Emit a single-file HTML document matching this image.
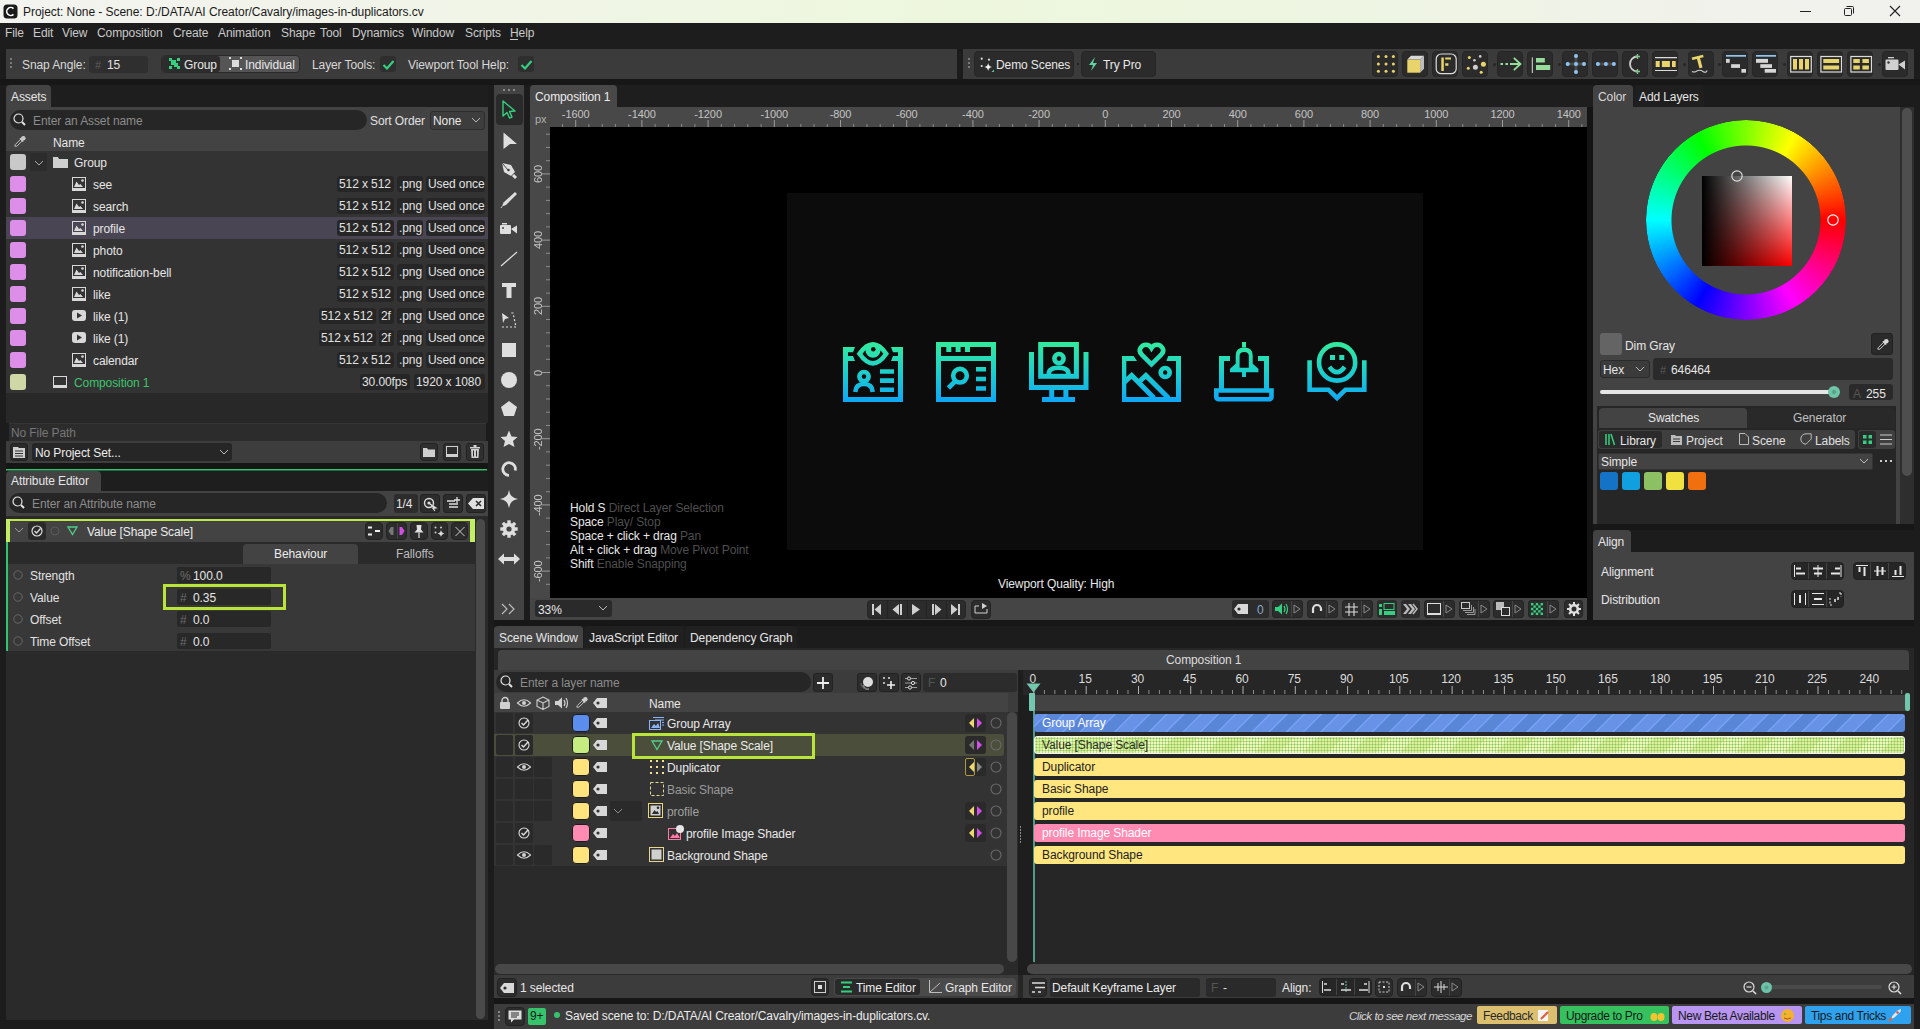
<!DOCTYPE html><html><head><meta charset="utf-8"><style>
*{box-sizing:border-box}
html,body{margin:0;padding:0}
body{width:1920px;height:1029px;overflow:hidden;position:relative;background:#1c1c1c;font-family:"Liberation Sans",sans-serif;font-size:12px;color:#d6d6d6}
.a{position:absolute}
.t{white-space:nowrap;line-height:14px;letter-spacing:-0.1px}
svg{overflow:visible}
</style></head><body><div class="a " style="left:0px;top:0px;width:1920px;height:23px;background:linear-gradient(90deg,#f3f3ef 0%,#f1f4e9 20%,#edf7dd 50%,#eef5e2 70%,#f0f2ea 88%,#f1f1ee 100%);"></div>
<svg class="a" style="left:3px;top:4px;" width="15" height="15" viewBox="0 0 15 15"><rect x="0.5" y="0.5" width="14" height="14" rx="3.5" fill="#1a1a1a"/><path d="M10.5 4.6 A4 4 0 1 0 10.5 10.4" stroke="#fff" stroke-width="1.6" fill="none"/></svg>
<div class="a t" style="left:23px;top:5px;color:#1a1a1a;font-size:12px;letter-spacing:-0.05px">Project: None - Scene: D:/DATA/AI Creator/Cavalry/images-in-duplicators.cv</div>
<div class="a " style="left:1800px;top:11px;width:11px;height:1px;background:#222;"></div>
<svg class="a" style="left:1843px;top:5px;" width="12" height="12" viewBox="0 0 12 12"><rect x="1.5" y="3.5" width="7" height="7" rx="1" fill="none" stroke="#222"/><path d="M3.5 1.5 H9.5 Q10.5 1.5 10.5 2.5 V8.5" fill="none" stroke="#222"/></svg>
<svg class="a" style="left:1889px;top:5px;" width="12" height="12" viewBox="0 0 12 12"><path d="M1 1 L11 11 M11 1 L1 11" stroke="#222" stroke-width="1.1"/></svg>
<div class="a " style="left:0px;top:23px;width:1920px;height:26px;background:#1d1d1d;"></div>
<div class="a t" style="left:5px;top:26px;color:#c9c9c9;font-size:12px;">File</div>
<div class="a t" style="left:33px;top:26px;color:#c9c9c9;font-size:12px;">Edit</div>
<div class="a t" style="left:62px;top:26px;color:#c9c9c9;font-size:12px;">View</div>
<div class="a t" style="left:97px;top:26px;color:#c9c9c9;font-size:12px;">Composition</div>
<div class="a t" style="left:173px;top:26px;color:#c9c9c9;font-size:12px;">Create</div>
<div class="a t" style="left:218px;top:26px;color:#c9c9c9;font-size:12px;">Animation</div>
<div class="a t" style="left:281px;top:26px;color:#c9c9c9;font-size:12px;">Shape</div>
<div class="a t" style="left:320px;top:26px;color:#c9c9c9;font-size:12px;">Tool</div>
<div class="a t" style="left:352px;top:26px;color:#c9c9c9;font-size:12px;">Dynamics</div>
<div class="a t" style="left:412px;top:26px;color:#c9c9c9;font-size:12px;">Window</div>
<div class="a t" style="left:465px;top:26px;color:#c9c9c9;font-size:12px;">Scripts</div>
<div class="a t" style="left:510px;top:26px;color:#c9c9c9;font-size:12px;">Help</div>
<div class="a " style="left:510px;top:39px;width:8px;height:1px;background:#c9c9c9;"></div>
<div class="a " style="left:0px;top:79px;width:1920px;height:6px;background:#171717;"></div>
<div class="a " style="left:6px;top:49px;width:951px;height:30px;background:#3b3b3b;"></div>
<div class="a " style="left:963px;top:49px;width:951px;height:30px;background:#3b3b3b;"></div>
<div class="a " style="left:10px;top:58px;width:2px;height:2px;background:#7a7a7a;"></div>
<div class="a " style="left:10px;top:62px;width:2px;height:2px;background:#7a7a7a;"></div>
<div class="a " style="left:10px;top:66px;width:2px;height:2px;background:#7a7a7a;"></div>
<div class="a " style="left:968px;top:58px;width:2px;height:2px;background:#7a7a7a;"></div>
<div class="a " style="left:968px;top:62px;width:2px;height:2px;background:#7a7a7a;"></div>
<div class="a " style="left:968px;top:66px;width:2px;height:2px;background:#7a7a7a;"></div>
<div class="a t" style="left:22px;top:58px;color:#d8d8d8;font-size:12px;">Snap Angle:</div>
<div class="a " style="left:89px;top:56px;width:59px;height:17px;background:#2f2f2f;border-radius:3px"></div>
<div class="a t" style="left:95px;top:58px;color:#5c5c5c;font-size:11px;">#</div>
<div class="a t" style="left:107px;top:58px;color:#e0e0e0;font-size:12px;">15</div>
<div class="a " style="left:161px;top:55px;width:139px;height:18px;background:#555555;border-radius:4px;border:1px solid #2a2a2a"></div>
<div class="a " style="left:162px;top:56px;width:58px;height:16px;background:#2c2c2c;border-radius:3px"></div>
<svg class="a" style="left:168px;top:57px;" width="13" height="13" viewBox="0 0 13 13"><rect x="1" y="1" width="3" height="3" fill="#35d07f"/><rect x="9" y="1" width="3" height="3" fill="#35d07f"/><rect x="1" y="9" width="3" height="3" fill="#35d07f"/><rect x="9" y="9" width="3" height="3" fill="#35d07f"/><rect x="3" y="3" width="5" height="5" fill="#35d07f"/><rect x="6" y="6" width="4" height="4" fill="#35d07f"/></svg>
<div class="a t" style="left:184px;top:58px;color:#e8e8e8;font-size:12px;">Group</div>
<svg class="a" style="left:229px;top:57px;" width="13" height="13" viewBox="0 0 13 13"><rect x="0" y="0" width="2" height="2" fill="#ddd"/><rect x="11" y="0" width="2" height="2" fill="#ddd"/><rect x="0" y="11" width="2" height="2" fill="#ddd"/><rect x="11" y="11" width="2" height="2" fill="#ddd"/><rect x="3" y="3" width="7" height="7" fill="#ddd"/></svg>
<div class="a t" style="left:245px;top:58px;color:#e8e8e8;font-size:12px;">Individual</div>
<div class="a t" style="left:312px;top:58px;color:#d8d8d8;font-size:12px;">Layer Tools:</div>
<div class="a " style="left:380px;top:56px;width:16px;height:16px;background:#2e2e2e;border-radius:3px"></div>
<svg class="a" style="left:380px;top:56px;" width="16" height="16" viewBox="0 0 16 16"><path d="M3.5 9 L7 12.5 L13.5 5" stroke="#35d07f" stroke-width="2.2" fill="none"/></svg>
<div class="a t" style="left:408px;top:58px;color:#d8d8d8;font-size:12px;">Viewport Tool Help:</div>
<div class="a " style="left:518px;top:56px;width:16px;height:16px;background:#2e2e2e;border-radius:3px"></div>
<svg class="a" style="left:518px;top:56px;" width="16" height="16" viewBox="0 0 16 16"><path d="M3.5 9 L7 12.5 L13.5 5" stroke="#35d07f" stroke-width="2.2" fill="none"/></svg>
<div class="a " style="left:974px;top:51px;width:100px;height:26px;background:#2b2b2b;border-radius:4px;border:1px solid #262626"></div>
<svg class="a" style="left:978px;top:55px;" width="18" height="18" viewBox="0 0 18 18"><circle cx="3.7" cy="3.7" r="1.1" fill="#ddd"/><circle cx="11" cy="4.7" r="1.1" fill="#ddd"/><circle cx="3.7" cy="11" r="1.1" fill="#ddd"/><path d="M10.2 8 Q10.7 11.3 14 12 Q10.7 12.7 10.2 16 Q9.7 12.7 6.4 12 Q9.7 11.3 10.2 8 Z" fill="#eee"/><path d="M16 14.5 V17 H13.5 Z" fill="#5fc4a0"/></svg>
<div class="a t" style="left:996px;top:58px;color:#e8e8e8;font-size:12px;">Demo Scenes</div>
<div class="a " style="left:1077px;top:63px;width:2px;height:2px;background:#222;"></div>
<div class="a " style="left:1081px;top:51px;width:75px;height:26px;background:#2b2b2b;border-radius:4px;border:1px solid #262626"></div>
<svg class="a" style="left:1088px;top:57px;" width="10" height="14" viewBox="0 0 10 14"><path d="M7 0 L1 8 H5 L3 14 L9 6 H5 Z" fill="#5fd3a5"/></svg>
<div class="a t" style="left:1103px;top:58px;color:#e8e8e8;font-size:12px;">Try Pro</div>
<div class="a " style="left:1372px;top:51px;width:26px;height:26px;background:#2b2b2b;border-radius:4px;border:1px solid #262626"></div>
<div class="a " style="left:1402px;top:51px;width:26px;height:26px;background:#2b2b2b;border-radius:4px;border:1px solid #262626"></div>
<div class="a " style="left:1432px;top:51px;width:26px;height:26px;background:#2b2b2b;border-radius:4px;border:1px solid #262626"></div>
<div class="a " style="left:1462px;top:51px;width:26px;height:26px;background:#2b2b2b;border-radius:4px;border:1px solid #262626"></div>
<div class="a " style="left:1497px;top:51px;width:26px;height:26px;background:#2b2b2b;border-radius:4px;border:1px solid #262626"></div>
<div class="a " style="left:1527px;top:51px;width:26px;height:26px;background:#2b2b2b;border-radius:4px;border:1px solid #262626"></div>
<div class="a " style="left:1562px;top:51px;width:26px;height:26px;background:#2b2b2b;border-radius:4px;border:1px solid #262626"></div>
<div class="a " style="left:1592px;top:51px;width:26px;height:26px;background:#2b2b2b;border-radius:4px;border:1px solid #262626"></div>
<div class="a " style="left:1622px;top:51px;width:26px;height:26px;background:#2b2b2b;border-radius:4px;border:1px solid #262626"></div>
<div class="a " style="left:1652px;top:51px;width:26px;height:26px;background:#2b2b2b;border-radius:4px;border:1px solid #262626"></div>
<div class="a " style="left:1688px;top:51px;width:26px;height:26px;background:#2b2b2b;border-radius:4px;border:1px solid #262626"></div>
<div class="a " style="left:1722px;top:51px;width:26px;height:26px;background:#2b2b2b;border-radius:4px;border:1px solid #262626"></div>
<div class="a " style="left:1752px;top:51px;width:26px;height:26px;background:#2b2b2b;border-radius:4px;border:1px solid #262626"></div>
<div class="a " style="left:1787px;top:51px;width:26px;height:26px;background:#2b2b2b;border-radius:4px;border:1px solid #262626"></div>
<div class="a " style="left:1817px;top:51px;width:26px;height:26px;background:#2b2b2b;border-radius:4px;border:1px solid #262626"></div>
<div class="a " style="left:1847px;top:51px;width:26px;height:26px;background:#2b2b2b;border-radius:4px;border:1px solid #262626"></div>
<div class="a " style="left:1882px;top:51px;width:26px;height:26px;background:#2b2b2b;border-radius:4px;border:1px solid #262626"></div>
<div class="a " style="left:1493px;top:63px;width:3px;height:3px;background:#262626;border-radius:50%"></div>
<div class="a " style="left:1558px;top:63px;width:3px;height:3px;background:#262626;border-radius:50%"></div>
<div class="a " style="left:1683px;top:63px;width:3px;height:3px;background:#262626;border-radius:50%"></div>
<div class="a " style="left:1718px;top:63px;width:3px;height:3px;background:#262626;border-radius:50%"></div>
<div class="a " style="left:1783px;top:63px;width:3px;height:3px;background:#262626;border-radius:50%"></div>
<div class="a " style="left:1878px;top:63px;width:3px;height:3px;background:#262626;border-radius:50%"></div>
<div class="a " style="left:6px;top:85px;width:482px;height:22px;background:#1e1e1e;"></div>
<div class="a " style="left:6px;top:85px;width:45px;height:22px;background:#434343;border-radius:4px 4px 0 0"></div>
<div class="a t" style="left:11px;top:90px;color:#e6e6e6;font-size:12px;">Assets</div>
<div class="a " style="left:6px;top:107px;width:482px;height:44px;background:#434343;"></div>
<div class="a " style="left:10px;top:110px;width:357px;height:20px;background:#262626;border-radius:10px"></div>
<svg class="a" style="left:13px;top:113px;" width="13" height="13" viewBox="0 0 13 13"><circle cx="5.5" cy="5.5" r="4.5" stroke="#e6e6e6" stroke-width="1.2" fill="none"/><path d="M9 9 L12 12" stroke="#e6e6e6" stroke-width="2"/></svg>
<div class="a t" style="left:33px;top:114px;color:#8c8c8c;font-size:12px;">Enter an Asset name</div>
<div class="a t" style="left:370px;top:114px;color:#e0e0e0;font-size:12px;">Sort Order</div>
<div class="a " style="left:430px;top:111px;width:55px;height:19px;background:#3d3d3d;border-radius:3px;border:1px solid #2d2d2d"></div>
<div class="a t" style="left:433px;top:114px;color:#e8e8e8;font-size:12px;">None</div>
<svg class="a" style="left:471px;top:117px;" width="10" height="6" viewBox="0 0 10 6"><path d="M1 1 L5 5 L9 1" stroke="#bbb" stroke-width="1" fill="none"/></svg>
<svg class="a" style="left:13px;top:135px;" width="13" height="13" viewBox="0 0 13 13"><path d="M1.8 11.2 L2.3 9.6 L7.6 4.3 L9.2 5.9 L3.9 11.2 Z" stroke="#c8c8c8" stroke-width="0.9" fill="none"/><path d="M7 3.2 L10.3 6.5" stroke="#c8c8c8" stroke-width="1.6"/><circle cx="10.3" cy="3.2" r="2.3" fill="#c8c8c8"/></svg>
<div class="a t" style="left:53px;top:136px;color:#e6e6e6;font-size:12px;">Name</div>
<div class="a " style="left:6px;top:151px;width:482px;height:242px;background:#333333;"></div>
<div class="a " style="left:6px;top:217px;width:482px;height:22px;background:#4a4552;"></div>
<div class="a " style="left:10px;top:154px;width:16px;height:16px;background:#c9c9c9;border-radius:3px"></div>
<div class="a " style="left:30px;top:153px;width:17px;height:18px;background:#2c2c2c;border-radius:2px"></div>
<svg class="a" style="left:34px;top:160px;" width="10" height="6" viewBox="0 0 10 6"><path d="M1 1 L5 5 L9 1" stroke="#aaa" stroke-width="1" fill="none"/></svg>
<svg class="a" style="left:53px;top:156px;" width="15" height="12" viewBox="0 0 15 12"><path d="M0 1 H5 L6 3 H15 V12 H0 Z" fill="#cfcfcf"/></svg>
<div class="a t" style="left:74px;top:156px;color:#e6e6e6;font-size:12px;">Group</div>
<div class="a " style="left:10px;top:176px;width:16px;height:16px;background:#dc8ee8;border-radius:3px"></div>
<svg class="a" style="left:72px;top:177px;" width="14" height="14" viewBox="0 0 14 14"><rect x="0.5" y="0.5" width="13" height="13" fill="none" stroke="#d8d8d8"/><rect x="0" y="11" width="14" height="3" fill="#d8d8d8"/><path d="M2 10 L4.5 4.5 L7 8 L8.5 7 L11 10 Z" fill="#d8d8d8"/><circle cx="10.5" cy="3.5" r="1.3" fill="#d8d8d8"/></svg>
<div class="a t" style="left:93px;top:178px;color:#e6e6e6;font-size:12px;">see</div>
<div class="a " style="left:337px;top:176px;width:57px;height:16px;background:#262626;border-radius:3px"></div>
<div class="a t" style="left:339px;top:177px;color:#e2e2e2;font-size:12px;">512 x 512</div>
<div class="a " style="left:397px;top:176px;width:26px;height:16px;background:#262626;border-radius:3px"></div>
<div class="a t" style="left:399px;top:177px;color:#e2e2e2;font-size:12px;">.png</div>
<div class="a " style="left:426px;top:176px;width:59px;height:16px;background:#262626;border-radius:3px"></div>
<div class="a t" style="left:428px;top:177px;color:#e2e2e2;font-size:12px;">Used once</div>
<div class="a " style="left:10px;top:198px;width:16px;height:16px;background:#dc8ee8;border-radius:3px"></div>
<svg class="a" style="left:72px;top:199px;" width="14" height="14" viewBox="0 0 14 14"><rect x="0.5" y="0.5" width="13" height="13" fill="none" stroke="#d8d8d8"/><rect x="0" y="11" width="14" height="3" fill="#d8d8d8"/><path d="M2 10 L4.5 4.5 L7 8 L8.5 7 L11 10 Z" fill="#d8d8d8"/><circle cx="10.5" cy="3.5" r="1.3" fill="#d8d8d8"/></svg>
<div class="a t" style="left:93px;top:200px;color:#e6e6e6;font-size:12px;">search</div>
<div class="a " style="left:337px;top:198px;width:57px;height:16px;background:#262626;border-radius:3px"></div>
<div class="a t" style="left:339px;top:199px;color:#e2e2e2;font-size:12px;">512 x 512</div>
<div class="a " style="left:397px;top:198px;width:26px;height:16px;background:#262626;border-radius:3px"></div>
<div class="a t" style="left:399px;top:199px;color:#e2e2e2;font-size:12px;">.png</div>
<div class="a " style="left:426px;top:198px;width:59px;height:16px;background:#262626;border-radius:3px"></div>
<div class="a t" style="left:428px;top:199px;color:#e2e2e2;font-size:12px;">Used once</div>
<div class="a " style="left:10px;top:220px;width:16px;height:16px;background:#dc8ee8;border-radius:3px"></div>
<svg class="a" style="left:72px;top:221px;" width="14" height="14" viewBox="0 0 14 14"><rect x="0.5" y="0.5" width="13" height="13" fill="none" stroke="#d8d8d8"/><rect x="0" y="11" width="14" height="3" fill="#d8d8d8"/><path d="M2 10 L4.5 4.5 L7 8 L8.5 7 L11 10 Z" fill="#d8d8d8"/><circle cx="10.5" cy="3.5" r="1.3" fill="#d8d8d8"/></svg>
<div class="a t" style="left:93px;top:222px;color:#e6e6e6;font-size:12px;">profile</div>
<div class="a " style="left:337px;top:220px;width:57px;height:16px;background:#262626;border-radius:3px"></div>
<div class="a t" style="left:339px;top:221px;color:#e2e2e2;font-size:12px;">512 x 512</div>
<div class="a " style="left:397px;top:220px;width:26px;height:16px;background:#262626;border-radius:3px"></div>
<div class="a t" style="left:399px;top:221px;color:#e2e2e2;font-size:12px;">.png</div>
<div class="a " style="left:426px;top:220px;width:59px;height:16px;background:#262626;border-radius:3px"></div>
<div class="a t" style="left:428px;top:221px;color:#e2e2e2;font-size:12px;">Used once</div>
<div class="a " style="left:10px;top:242px;width:16px;height:16px;background:#dc8ee8;border-radius:3px"></div>
<svg class="a" style="left:72px;top:243px;" width="14" height="14" viewBox="0 0 14 14"><rect x="0.5" y="0.5" width="13" height="13" fill="none" stroke="#d8d8d8"/><rect x="0" y="11" width="14" height="3" fill="#d8d8d8"/><path d="M2 10 L4.5 4.5 L7 8 L8.5 7 L11 10 Z" fill="#d8d8d8"/><circle cx="10.5" cy="3.5" r="1.3" fill="#d8d8d8"/></svg>
<div class="a t" style="left:93px;top:244px;color:#e6e6e6;font-size:12px;">photo</div>
<div class="a " style="left:337px;top:242px;width:57px;height:16px;background:#262626;border-radius:3px"></div>
<div class="a t" style="left:339px;top:243px;color:#e2e2e2;font-size:12px;">512 x 512</div>
<div class="a " style="left:397px;top:242px;width:26px;height:16px;background:#262626;border-radius:3px"></div>
<div class="a t" style="left:399px;top:243px;color:#e2e2e2;font-size:12px;">.png</div>
<div class="a " style="left:426px;top:242px;width:59px;height:16px;background:#262626;border-radius:3px"></div>
<div class="a t" style="left:428px;top:243px;color:#e2e2e2;font-size:12px;">Used once</div>
<div class="a " style="left:10px;top:264px;width:16px;height:16px;background:#dc8ee8;border-radius:3px"></div>
<svg class="a" style="left:72px;top:265px;" width="14" height="14" viewBox="0 0 14 14"><rect x="0.5" y="0.5" width="13" height="13" fill="none" stroke="#d8d8d8"/><rect x="0" y="11" width="14" height="3" fill="#d8d8d8"/><path d="M2 10 L4.5 4.5 L7 8 L8.5 7 L11 10 Z" fill="#d8d8d8"/><circle cx="10.5" cy="3.5" r="1.3" fill="#d8d8d8"/></svg>
<div class="a t" style="left:93px;top:266px;color:#e6e6e6;font-size:12px;">notification-bell</div>
<div class="a " style="left:337px;top:264px;width:57px;height:16px;background:#262626;border-radius:3px"></div>
<div class="a t" style="left:339px;top:265px;color:#e2e2e2;font-size:12px;">512 x 512</div>
<div class="a " style="left:397px;top:264px;width:26px;height:16px;background:#262626;border-radius:3px"></div>
<div class="a t" style="left:399px;top:265px;color:#e2e2e2;font-size:12px;">.png</div>
<div class="a " style="left:426px;top:264px;width:59px;height:16px;background:#262626;border-radius:3px"></div>
<div class="a t" style="left:428px;top:265px;color:#e2e2e2;font-size:12px;">Used once</div>
<div class="a " style="left:10px;top:286px;width:16px;height:16px;background:#dc8ee8;border-radius:3px"></div>
<svg class="a" style="left:72px;top:287px;" width="14" height="14" viewBox="0 0 14 14"><rect x="0.5" y="0.5" width="13" height="13" fill="none" stroke="#d8d8d8"/><rect x="0" y="11" width="14" height="3" fill="#d8d8d8"/><path d="M2 10 L4.5 4.5 L7 8 L8.5 7 L11 10 Z" fill="#d8d8d8"/><circle cx="10.5" cy="3.5" r="1.3" fill="#d8d8d8"/></svg>
<div class="a t" style="left:93px;top:288px;color:#e6e6e6;font-size:12px;">like</div>
<div class="a " style="left:337px;top:286px;width:57px;height:16px;background:#262626;border-radius:3px"></div>
<div class="a t" style="left:339px;top:287px;color:#e2e2e2;font-size:12px;">512 x 512</div>
<div class="a " style="left:397px;top:286px;width:26px;height:16px;background:#262626;border-radius:3px"></div>
<div class="a t" style="left:399px;top:287px;color:#e2e2e2;font-size:12px;">.png</div>
<div class="a " style="left:426px;top:286px;width:59px;height:16px;background:#262626;border-radius:3px"></div>
<div class="a t" style="left:428px;top:287px;color:#e2e2e2;font-size:12px;">Used once</div>
<div class="a " style="left:10px;top:308px;width:16px;height:16px;background:#dc8ee8;border-radius:3px"></div>
<svg class="a" style="left:72px;top:309px;" width="14" height="14" viewBox="0 0 14 14"><rect x="0" y="1" width="14" height="11" rx="3" fill="#d8d8d8"/><path d="M5 3.5 L10 6.5 L5 9.5 Z" fill="#333"/></svg>
<div class="a t" style="left:93px;top:310px;color:#e6e6e6;font-size:12px;">like (1)</div>
<div class="a " style="left:319px;top:308px;width:57px;height:16px;background:#262626;border-radius:3px"></div>
<div class="a t" style="left:321px;top:309px;color:#e2e2e2;font-size:12px;">512 x 512</div>
<div class="a " style="left:379px;top:308px;width:15px;height:16px;background:#262626;border-radius:3px"></div>
<div class="a t" style="left:381px;top:309px;color:#e2e2e2;font-size:12px;">2f</div>
<div class="a " style="left:397px;top:308px;width:26px;height:16px;background:#262626;border-radius:3px"></div>
<div class="a t" style="left:399px;top:309px;color:#e2e2e2;font-size:12px;">.png</div>
<div class="a " style="left:426px;top:308px;width:59px;height:16px;background:#262626;border-radius:3px"></div>
<div class="a t" style="left:428px;top:309px;color:#e2e2e2;font-size:12px;">Used once</div>
<div class="a " style="left:10px;top:330px;width:16px;height:16px;background:#dc8ee8;border-radius:3px"></div>
<svg class="a" style="left:72px;top:331px;" width="14" height="14" viewBox="0 0 14 14"><rect x="0" y="1" width="14" height="11" rx="3" fill="#d8d8d8"/><path d="M5 3.5 L10 6.5 L5 9.5 Z" fill="#333"/></svg>
<div class="a t" style="left:93px;top:332px;color:#e6e6e6;font-size:12px;">like (1)</div>
<div class="a " style="left:319px;top:330px;width:57px;height:16px;background:#262626;border-radius:3px"></div>
<div class="a t" style="left:321px;top:331px;color:#e2e2e2;font-size:12px;">512 x 512</div>
<div class="a " style="left:379px;top:330px;width:15px;height:16px;background:#262626;border-radius:3px"></div>
<div class="a t" style="left:381px;top:331px;color:#e2e2e2;font-size:12px;">2f</div>
<div class="a " style="left:397px;top:330px;width:26px;height:16px;background:#262626;border-radius:3px"></div>
<div class="a t" style="left:399px;top:331px;color:#e2e2e2;font-size:12px;">.png</div>
<div class="a " style="left:426px;top:330px;width:59px;height:16px;background:#262626;border-radius:3px"></div>
<div class="a t" style="left:428px;top:331px;color:#e2e2e2;font-size:12px;">Used once</div>
<div class="a " style="left:10px;top:352px;width:16px;height:16px;background:#dc8ee8;border-radius:3px"></div>
<svg class="a" style="left:72px;top:353px;" width="14" height="14" viewBox="0 0 14 14"><rect x="0.5" y="0.5" width="13" height="13" fill="none" stroke="#d8d8d8"/><rect x="0" y="11" width="14" height="3" fill="#d8d8d8"/><path d="M2 10 L4.5 4.5 L7 8 L8.5 7 L11 10 Z" fill="#d8d8d8"/><circle cx="10.5" cy="3.5" r="1.3" fill="#d8d8d8"/></svg>
<div class="a t" style="left:93px;top:354px;color:#e6e6e6;font-size:12px;">calendar</div>
<div class="a " style="left:337px;top:352px;width:57px;height:16px;background:#262626;border-radius:3px"></div>
<div class="a t" style="left:339px;top:353px;color:#e2e2e2;font-size:12px;">512 x 512</div>
<div class="a " style="left:397px;top:352px;width:26px;height:16px;background:#262626;border-radius:3px"></div>
<div class="a t" style="left:399px;top:353px;color:#e2e2e2;font-size:12px;">.png</div>
<div class="a " style="left:426px;top:352px;width:59px;height:16px;background:#262626;border-radius:3px"></div>
<div class="a t" style="left:428px;top:353px;color:#e2e2e2;font-size:12px;">Used once</div>
<div class="a " style="left:10px;top:374px;width:16px;height:16px;background:#cfd7a6;border-radius:3px"></div>
<svg class="a" style="left:53px;top:376px;" width="14" height="12" viewBox="0 0 14 12"><rect x="0.5" y="0.5" width="13" height="9" fill="none" stroke="#d8d8d8"/><rect x="0" y="10" width="14" height="2" fill="#d8d8d8"/></svg>
<div class="a t" style="left:74px;top:376px;color:#3cc46c;font-size:12px;">Composition 1</div>
<div class="a " style="left:360px;top:374px;width:50px;height:16px;background:#262626;border-radius:3px"></div>
<div class="a t" style="left:362px;top:375px;color:#e2e2e2;font-size:12px;">30.00fps</div>
<div class="a " style="left:414px;top:374px;width:71px;height:16px;background:#262626;border-radius:3px"></div>
<div class="a t" style="left:416px;top:375px;color:#e2e2e2;font-size:12px;">1920 x 1080</div>
<div class="a " style="left:6px;top:393px;width:482px;height:30px;background:#282828;"></div>
<div class="a " style="left:9px;top:423px;width:477px;height:18px;background:#2c2c2c;border-top:1px solid #353535"></div>
<div class="a t" style="left:11px;top:426px;color:#777;font-size:12px;">No File Path</div>
<div class="a " style="left:6px;top:441px;width:482px;height:22px;background:#3d3d3d;"></div>
<div class="a " style="left:10px;top:443px;width:18px;height:18px;background:#2a2a2a;border-radius:3px;border:1px solid #222"></div>
<svg class="a" style="left:13px;top:446px;" width="12" height="12" viewBox="0 0 12 12"><path d="M0 1 H5 L6 2 H12 V12 H0 Z" fill="#cfcfcf"/><path d="M2 5 H10 M2 7.5 H10 M2 10 H10" stroke="#333" stroke-width="1"/></svg>
<div class="a " style="left:32px;top:443px;width:200px;height:18px;background:#262626;border-radius:3px"></div>
<div class="a t" style="left:35px;top:446px;color:#ececec;font-size:12px;">No Project Set...</div>
<svg class="a" style="left:219px;top:449px;" width="10" height="6" viewBox="0 0 10 6"><path d="M1 1 L5 5 L9 1" stroke="#bbb" stroke-width="1" fill="none"/></svg>
<div class="a " style="left:420px;top:443px;width:18px;height:18px;background:#2f2f2f;border-radius:3px;border:1px solid #232323"></div>
<div class="a " style="left:443px;top:443px;width:18px;height:18px;background:#2f2f2f;border-radius:3px;border:1px solid #232323"></div>
<div class="a " style="left:466px;top:443px;width:18px;height:18px;background:#2f2f2f;border-radius:3px;border:1px solid #232323"></div>
<svg class="a" style="left:423px;top:447px;" width="12" height="10" viewBox="0 0 12 10"><path d="M0 1 H4 L5 2.5 H12 V10 H0 Z" fill="#cfcfcf"/></svg>
<svg class="a" style="left:446px;top:446px;" width="12" height="12" viewBox="0 0 12 12"><rect x="0.5" y="0.5" width="11" height="8" fill="none" stroke="#d0d0d0"/><rect x="0" y="9" width="12" height="2" fill="#d0d0d0"/></svg>
<svg class="a" style="left:470px;top:445px;" width="10" height="14" viewBox="0 0 10 14"><rect x="0" y="2" width="10" height="1.5" fill="#d0d0d0"/><rect x="3.5" y="0" width="3" height="2" fill="#d0d0d0"/><path d="M1 4 H9 L8.5 13 H1.5 Z" fill="#d0d0d0"/><path d="M3.5 5.5 V11.5 M6.5 5.5 V11.5" stroke="#2f2f2f" stroke-width="1"/></svg>
<div class="a " style="left:6px;top:463px;width:482px;height:6px;background:#161616;"></div>
<div class="a " style="left:6px;top:469px;width:481px;height:1px;background:#2fc66f;"></div>
<div class="a " style="left:6px;top:470px;width:481px;height:1px;background:rgba(47,198,111,0.45);"></div>
<div class="a " style="left:6px;top:471px;width:482px;height:20px;background:#1e1e1e;"></div>
<div class="a " style="left:6px;top:471px;width:95px;height:20px;background:#434343;border-radius:4px 4px 0 0"></div>
<div class="a t" style="left:11px;top:474px;color:#e6e6e6;font-size:12px;">Attribute Editor</div>
<div class="a " style="left:6px;top:491px;width:482px;height:529px;background:#2a2a2a;"></div>
<div class="a " style="left:6px;top:491px;width:482px;height:25px;background:#434343;"></div>
<div class="a " style="left:9px;top:493px;width:378px;height:20px;background:#262626;border-radius:10px"></div>
<svg class="a" style="left:12px;top:496px;" width="13" height="13" viewBox="0 0 13 13"><circle cx="5.5" cy="5.5" r="4.5" stroke="#e6e6e6" stroke-width="1.2" fill="none"/><path d="M9 9 L12 12" stroke="#e6e6e6" stroke-width="2"/></svg>
<div class="a t" style="left:32px;top:497px;color:#8c8c8c;font-size:12px;">Enter an Attribute name</div>
<div class="a " style="left:394px;top:494px;width:24px;height:19px;background:#2c2c2c;border-radius:3px"></div>
<div class="a t" style="left:396px;top:497px;color:#e6e6e6;font-size:12px;">1/4</div>
<div class="a " style="left:420px;top:494px;width:20px;height:19px;background:#2c2c2c;border-radius:3px;border:1px solid #222"></div>
<div class="a " style="left:443px;top:494px;width:20px;height:19px;background:#2c2c2c;border-radius:3px;border:1px solid #222"></div>
<div class="a " style="left:466px;top:494px;width:20px;height:19px;background:#2c2c2c;border-radius:3px;border:1px solid #222"></div>
<svg class="a" style="left:423px;top:497px;" width="14" height="14" viewBox="0 0 14 14"><circle cx="6" cy="6" r="4.5" stroke="#ddd" stroke-width="1.4" fill="none"/><circle cx="6" cy="6" r="1.6" fill="#ddd"/><path d="M7 7 L13 11 L10 11.5 L12 14" stroke="#ddd" stroke-width="1.2" fill="#ddd"/></svg>
<svg class="a" style="left:446px;top:497px;" width="14" height="13" viewBox="0 0 14 13"><path d="M1 4 H9 M3 7 H12 M3 10 H12" stroke="#e0e0e0" stroke-width="1.5"/><path d="M11 0 V6 M8 3 H14" stroke="#e0e0e0" stroke-width="1.3"/></svg>
<svg class="a" style="left:468px;top:498px;" width="16" height="11" viewBox="0 0 16 11"><path d="M5 0 H16 V11 H5 L0 5.5 Z" fill="#e0e0e0"/><path d="M8 3 L13 8 M13 3 L8 8" stroke="#2c2c2c" stroke-width="1.6"/></svg>
<div class="a " style="left:476px;top:519px;width:9px;height:500px;background:#4a4a4a;border-radius:5px"></div>
<div class="a " style="left:6px;top:519px;width:469px;height:132px;background:#2f2f2f;"></div>
<div class="a " style="left:6px;top:519px;width:469px;height:23px;background:#434343;"></div>
<div class="a " style="left:6px;top:519px;width:469px;height:2px;background:#bde84a;"></div>
<div class="a " style="left:6px;top:519px;width:4px;height:23px;background:#c4ee62;"></div>
<div class="a " style="left:470px;top:519px;width:5px;height:23px;background:#c4ee62;"></div>
<div class="a " style="left:6px;top:542px;width:2px;height:109px;background:#2fc66f;"></div>
<svg class="a" style="left:14px;top:527px;" width="10" height="6" viewBox="0 0 10 6"><path d="M1 1 L5 5 L9 1" stroke="#9a9a9a" stroke-width="1" fill="none"/></svg>
<div class="a " style="left:28px;top:522px;width:18px;height:18px;background:#2a2a2a;border-radius:3px"></div>
<svg class="a" style="left:31px;top:525px;" width="12" height="12" viewBox="0 0 12 12"><circle cx="6" cy="6" r="5" stroke="#ddd" stroke-width="1.2" fill="none"/><path d="M3.5 6 L5.5 8 L9.5 3.5" stroke="#ddd" stroke-width="1.3" fill="none"/></svg>
<svg class="a" style="left:50px;top:526px;" width="10" height="10" viewBox="0 0 10 10"><circle cx="5" cy="5" r="4" stroke="#5a5a5a" stroke-width="1" fill="none"/></svg>
<svg class="a" style="left:67px;top:526px;" width="11" height="9" viewBox="0 0 11 9"><path d="M1 1 H10 L5.5 8.5 Z" stroke="#4fd08a" stroke-width="1.3" fill="none"/></svg>
<div class="a t" style="left:87px;top:525px;color:#ececec;font-size:12px;">Value [Shape Scale]</div>
<div class="a " style="left:365px;top:522px;width:18px;height:18px;background:#2c2c2c;border-radius:4px;border:1px solid #232323"></div>
<div class="a " style="left:386px;top:522px;width:21px;height:18px;background:#2c2c2c;border-radius:4px;border:1px solid #232323"></div>
<div class="a " style="left:410px;top:522px;width:18px;height:18px;background:#2c2c2c;border-radius:4px;border:1px solid #232323"></div>
<div class="a " style="left:431px;top:522px;width:17px;height:18px;background:#2c2c2c;border-radius:4px;border:1px solid #232323"></div>
<div class="a " style="left:451px;top:522px;width:17px;height:18px;background:#2c2c2c;border-radius:4px;border:1px solid #232323"></div>
<div class="a " style="left:397px;top:523px;width:1px;height:16px;background:#444;"></div>
<svg class="a" style="left:367px;top:526px;" width="14" height="11" viewBox="0 0 14 11"><path d="M1 1.5 H5 M1 8.5 H5 M8 5 H13" stroke="#eee" stroke-width="2"/></svg>
<svg class="a" style="left:388px;top:526px;" width="17" height="10" viewBox="0 0 17 10"><path d="M5.5 1 V9 H3 L0.5 5 L3 1 Z" fill="#777"/><path d="M11.5 1 V9 H14 L16.5 5 L14 1 Z" fill="#d14fe0"/></svg>
<svg class="a" style="left:413px;top:525px;" width="12" height="13" viewBox="0 0 12 13"><path d="M3.5 0 H8.5 L8 4.5 L10.5 7.5 H1.5 L4 4.5 Z" fill="#e0e0e0"/><path d="M6 7.5 V13" stroke="#e0e0e0" stroke-width="1.2"/></svg>
<svg class="a" style="left:433px;top:525px;" width="13" height="13" viewBox="0 0 13 13"><circle cx="2.5" cy="2.5" r="1" fill="#ccc"/><circle cx="8" cy="2.5" r="1" fill="#ccc"/><circle cx="2.5" cy="7.5" r="1" fill="#ccc"/><path d="M8 5 Q8.5 8 11.5 8.5 Q8.5 9 8 12 Q7.5 9 4.5 8.5 Q7.5 8 8 5 Z" fill="#ddd"/></svg>
<svg class="a" style="left:454px;top:526px;" width="12" height="11" viewBox="0 0 12 11"><path d="M1.5 1 L10.5 10 M10.5 1 L1.5 10" stroke="#ccc" stroke-width="1"/></svg>
<div class="a " style="left:8px;top:542px;width:467px;height:22px;background:#2a2a2a;"></div>
<div class="a " style="left:243px;top:544px;width:115px;height:20px;background:#434343;border-radius:4px 4px 0 0"></div>
<div class="a t" style="left:274px;top:547px;color:#ececec;font-size:12px;">Behaviour</div>
<div class="a t" style="left:396px;top:547px;color:#bdbdbd;font-size:12px;">Falloffs</div>
<div class="a " style="left:8px;top:564px;width:467px;height:87px;background:#383838;"></div>
<svg class="a" style="left:13px;top:570px;" width="10" height="10" viewBox="0 0 10 10"><circle cx="5" cy="5" r="4.2" stroke="#666" stroke-width="1" fill="none"/></svg>
<div class="a t" style="left:30px;top:569px;color:#e2e2e2;font-size:12px;">Strength</div>
<div class="a " style="left:177px;top:567px;width:94px;height:16px;background:#282828;border-radius:2px"></div>
<div class="a t" style="left:180px;top:569px;color:#6c6c6c;font-size:12px;">%</div>
<div class="a t" style="left:193px;top:569px;color:#e6e6e6;font-size:12px;">100.0</div>
<svg class="a" style="left:13px;top:592px;" width="10" height="10" viewBox="0 0 10 10"><circle cx="5" cy="5" r="4.2" stroke="#666" stroke-width="1" fill="none"/></svg>
<div class="a t" style="left:30px;top:591px;color:#e2e2e2;font-size:12px;">Value</div>
<div class="a " style="left:177px;top:589px;width:94px;height:16px;background:#282828;border-radius:2px"></div>
<div class="a t" style="left:180px;top:591px;color:#6c6c6c;font-size:12px;">#</div>
<div class="a t" style="left:193px;top:591px;color:#e6e6e6;font-size:12px;">0.35</div>
<svg class="a" style="left:13px;top:614px;" width="10" height="10" viewBox="0 0 10 10"><circle cx="5" cy="5" r="4.2" stroke="#666" stroke-width="1" fill="none"/></svg>
<div class="a t" style="left:30px;top:613px;color:#e2e2e2;font-size:12px;">Offset</div>
<div class="a " style="left:177px;top:611px;width:94px;height:16px;background:#282828;border-radius:2px"></div>
<div class="a t" style="left:180px;top:613px;color:#6c6c6c;font-size:12px;">#</div>
<div class="a t" style="left:193px;top:613px;color:#e6e6e6;font-size:12px;">0.0</div>
<svg class="a" style="left:13px;top:636px;" width="10" height="10" viewBox="0 0 10 10"><circle cx="5" cy="5" r="4.2" stroke="#666" stroke-width="1" fill="none"/></svg>
<div class="a t" style="left:30px;top:635px;color:#e2e2e2;font-size:12px;">Time Offset</div>
<div class="a " style="left:177px;top:633px;width:94px;height:16px;background:#282828;border-radius:2px"></div>
<div class="a t" style="left:180px;top:635px;color:#6c6c6c;font-size:12px;">#</div>
<div class="a t" style="left:193px;top:635px;color:#e6e6e6;font-size:12px;">0.0</div>
<div class="a " style="left:163px;top:584px;width:123px;height:26px;border:3px solid #b9e43a"></div>
<div class="a " style="left:494px;top:85px;width:30px;height:535px;background:#434343;"></div>
<div class="a " style="left:503px;top:89px;width:2px;height:2px;background:#8a8a8a;"></div>
<div class="a " style="left:508px;top:89px;width:2px;height:2px;background:#8a8a8a;"></div>
<div class="a " style="left:513px;top:89px;width:2px;height:2px;background:#8a8a8a;"></div>
<div class="a " style="left:496px;top:94px;width:27px;height:31px;background:#2a2a2a;border-radius:4px"></div>
<svg class="a" style="left:499px;top:99px;" width="20" height="20" viewBox="0 0 20 20"><path d="M4 2 L16 12 L10.5 12.5 L13 18 L10.5 19 L8 13.5 L4 17 Z" stroke="#35d07f" stroke-width="1.4" fill="none" stroke-linejoin="round"/></svg>
<svg class="a" style="left:499px;top:130px;" width="20" height="20" viewBox="0 0 20 20"><path d="M4.5 2.5 L18 14 H11 L4.5 19 Z" fill="#dedede"/></svg>
<svg class="a" style="left:499px;top:160px;" width="20" height="20" viewBox="0 0 20 20"><path d="M3 3 L12 5 L16 12 L12 16 L5 12 Z" fill="#dedede"/><path d="M3 3 L9 10" stroke="#434343" stroke-width="1"/><circle cx="9.5" cy="10" r="1.3" fill="#434343"/><path d="M14 15 L17 18" stroke="#dedede" stroke-width="3"/></svg>
<svg class="a" style="left:499px;top:189px;" width="20" height="20" viewBox="0 0 20 20"><path d="M16 3 L18 5 L7 16 L3 17.5 L4.5 13.5 Z" fill="#dedede"/><path d="M3 17.5 L2 19" stroke="#dedede" stroke-width="1"/></svg>
<svg class="a" style="left:499px;top:219px;" width="20" height="20" viewBox="0 0 20 20"><rect x="1" y="6" width="11" height="9" rx="1" fill="#dedede"/><path d="M12 10 L18 6.5 V14.5 Z" fill="#dedede"/><rect x="3" y="4" width="5" height="1.5" fill="#dedede"/><circle cx="4" cy="9" r="1" fill="#434343"/></svg>
<svg class="a" style="left:499px;top:249px;" width="20" height="20" viewBox="0 0 20 20"><path d="M2 17 L18 3" stroke="#dedede" stroke-width="1.2"/></svg>
<svg class="a" style="left:499px;top:280px;" width="20" height="20" viewBox="0 0 20 20"><path d="M3 3 H17 V7 H12.5 V18 H7.5 V7 H3 Z" fill="#dedede"/></svg>
<svg class="a" style="left:499px;top:310px;" width="20" height="20" viewBox="0 0 20 20"><path d="M3 3 L10 8 L6 9 L4 13 Z" fill="#dedede"/><path d="M3 17 H17 L14 3 H12" stroke="#dedede" stroke-width="1.2" stroke-dasharray="2 2" fill="none"/></svg>
<svg class="a" style="left:499px;top:340px;" width="20" height="20" viewBox="0 0 20 20"><rect x="3" y="3" width="14" height="14" fill="#dedede"/></svg>
<svg class="a" style="left:499px;top:370px;" width="20" height="20" viewBox="0 0 20 20"><circle cx="10" cy="10" r="8" fill="#dedede"/></svg>
<svg class="a" style="left:499px;top:399px;" width="20" height="20" viewBox="0 0 20 20"><path d="M10 2 L18 8 L15 17 H5 L2 8 Z" fill="#dedede"/></svg>
<svg class="a" style="left:499px;top:429px;" width="20" height="20" viewBox="0 0 20 20"><path d="M10 1.5 L12.5 7.5 L18.5 8 L14 12 L15.5 18 L10 15 L4.5 18 L6 12 L1.5 8 L7.5 7.5 Z" fill="#dedede"/></svg>
<svg class="a" style="left:499px;top:459px;" width="20" height="20" viewBox="0 0 20 20"><path d="M10 16.3 A6.3 6.3 0 1 1 16.2 11.5" stroke="#dedede" stroke-width="2.8" fill="none"/></svg>
<svg class="a" style="left:499px;top:489px;" width="20" height="20" viewBox="0 0 20 20"><path d="M10 1 Q11 9 19 10 Q11 11 10 19 Q9 11 1 10 Q9 9 10 1 Z" fill="#dedede"/></svg>
<svg class="a" style="left:499px;top:519px;" width="20" height="20" viewBox="0 0 20 20"><rect x="8.3" y="1.3" width="3.4" height="4" fill="#dedede" transform="rotate(0 10 10)"/><rect x="8.3" y="1.3" width="3.4" height="4" fill="#dedede" transform="rotate(45 10 10)"/><rect x="8.3" y="1.3" width="3.4" height="4" fill="#dedede" transform="rotate(90 10 10)"/><rect x="8.3" y="1.3" width="3.4" height="4" fill="#dedede" transform="rotate(135 10 10)"/><rect x="8.3" y="1.3" width="3.4" height="4" fill="#dedede" transform="rotate(180 10 10)"/><rect x="8.3" y="1.3" width="3.4" height="4" fill="#dedede" transform="rotate(225 10 10)"/><rect x="8.3" y="1.3" width="3.4" height="4" fill="#dedede" transform="rotate(270 10 10)"/><rect x="8.3" y="1.3" width="3.4" height="4" fill="#dedede" transform="rotate(315 10 10)"/><circle cx="10" cy="10" r="6.3" fill="#dedede"/><circle cx="10" cy="10" r="2.6" fill="#434343"/></svg>
<svg class="a" style="left:499px;top:549px;" width="20" height="20" viewBox="0 0 20 20"><path d="M-1 10 L5 4.5 V8 H15 V4.5 L21 10 L15 15.5 V12 H5 V15.5 Z" fill="#dedede"/></svg>
<svg class="a" style="left:499px;top:599px;" width="20" height="20" viewBox="0 0 20 20"><path d="M3 5 L8 10 L3 15 M10 5 L15 10 L10 15" stroke="#bbb" stroke-width="1.2" fill="none"/></svg>
<div class="a " style="left:530px;top:85px;width:1063px;height:22px;background:#1e1e1e;"></div>
<div class="a " style="left:530px;top:85px;width:87px;height:22px;background:#484848;border-radius:4px 4px 0 0"></div>
<div class="a t" style="left:535px;top:90px;color:#ececec;font-size:12px;">Composition 1</div>
<div class="a " style="left:530px;top:107px;width:1063px;height:513px;background:#484848;"></div>
<div class="a " style="left:550px;top:127px;width:1037px;height:471px;background:#000;"></div>
<div class="a " style="left:1587px;top:107px;width:6px;height:513px;background:#141414;"></div>
<div class="a " style="left:787px;top:193px;width:636px;height:357px;background:#0c0c0c;"></div>
<svg class="a" style="left:0px;top:120px;" width="1587" height="7" viewBox="0 0 1587 7"><rect x="562.0" y="4" width="1" height="3" fill="#8a8a8a"/><rect x="575.2" y="0" width="1" height="7" fill="#9a9a9a"/><rect x="588.4" y="4" width="1" height="3" fill="#8a8a8a"/><rect x="601.7" y="4" width="1" height="3" fill="#8a8a8a"/><rect x="614.9" y="4" width="1" height="3" fill="#8a8a8a"/><rect x="628.2" y="4" width="1" height="3" fill="#8a8a8a"/><rect x="641.4" y="0" width="1" height="7" fill="#9a9a9a"/><rect x="654.6" y="4" width="1" height="3" fill="#8a8a8a"/><rect x="667.9" y="4" width="1" height="3" fill="#8a8a8a"/><rect x="681.1" y="4" width="1" height="3" fill="#8a8a8a"/><rect x="694.4" y="4" width="1" height="3" fill="#8a8a8a"/><rect x="707.6" y="0" width="1" height="7" fill="#9a9a9a"/><rect x="720.8" y="4" width="1" height="3" fill="#8a8a8a"/><rect x="734.1" y="4" width="1" height="3" fill="#8a8a8a"/><rect x="747.3" y="4" width="1" height="3" fill="#8a8a8a"/><rect x="760.6" y="4" width="1" height="3" fill="#8a8a8a"/><rect x="773.8" y="0" width="1" height="7" fill="#9a9a9a"/><rect x="787.0" y="4" width="1" height="3" fill="#8a8a8a"/><rect x="800.3" y="4" width="1" height="3" fill="#8a8a8a"/><rect x="813.5" y="4" width="1" height="3" fill="#8a8a8a"/><rect x="826.8" y="4" width="1" height="3" fill="#8a8a8a"/><rect x="840.0" y="0" width="1" height="7" fill="#9a9a9a"/><rect x="853.2" y="4" width="1" height="3" fill="#8a8a8a"/><rect x="866.5" y="4" width="1" height="3" fill="#8a8a8a"/><rect x="879.7" y="4" width="1" height="3" fill="#8a8a8a"/><rect x="893.0" y="4" width="1" height="3" fill="#8a8a8a"/><rect x="906.2" y="0" width="1" height="7" fill="#9a9a9a"/><rect x="919.4" y="4" width="1" height="3" fill="#8a8a8a"/><rect x="932.7" y="4" width="1" height="3" fill="#8a8a8a"/><rect x="945.9" y="4" width="1" height="3" fill="#8a8a8a"/><rect x="959.2" y="4" width="1" height="3" fill="#8a8a8a"/><rect x="972.4" y="0" width="1" height="7" fill="#9a9a9a"/><rect x="985.6" y="4" width="1" height="3" fill="#8a8a8a"/><rect x="998.9" y="4" width="1" height="3" fill="#8a8a8a"/><rect x="1012.1" y="4" width="1" height="3" fill="#8a8a8a"/><rect x="1025.4" y="4" width="1" height="3" fill="#8a8a8a"/><rect x="1038.6" y="0" width="1" height="7" fill="#9a9a9a"/><rect x="1051.8" y="4" width="1" height="3" fill="#8a8a8a"/><rect x="1065.1" y="4" width="1" height="3" fill="#8a8a8a"/><rect x="1078.3" y="4" width="1" height="3" fill="#8a8a8a"/><rect x="1091.6" y="4" width="1" height="3" fill="#8a8a8a"/><rect x="1104.8" y="0" width="1" height="7" fill="#9a9a9a"/><rect x="1118.0" y="4" width="1" height="3" fill="#8a8a8a"/><rect x="1131.3" y="4" width="1" height="3" fill="#8a8a8a"/><rect x="1144.5" y="4" width="1" height="3" fill="#8a8a8a"/><rect x="1157.8" y="4" width="1" height="3" fill="#8a8a8a"/><rect x="1171.0" y="0" width="1" height="7" fill="#9a9a9a"/><rect x="1184.2" y="4" width="1" height="3" fill="#8a8a8a"/><rect x="1197.5" y="4" width="1" height="3" fill="#8a8a8a"/><rect x="1210.7" y="4" width="1" height="3" fill="#8a8a8a"/><rect x="1224.0" y="4" width="1" height="3" fill="#8a8a8a"/><rect x="1237.2" y="0" width="1" height="7" fill="#9a9a9a"/><rect x="1250.4" y="4" width="1" height="3" fill="#8a8a8a"/><rect x="1263.7" y="4" width="1" height="3" fill="#8a8a8a"/><rect x="1276.9" y="4" width="1" height="3" fill="#8a8a8a"/><rect x="1290.2" y="4" width="1" height="3" fill="#8a8a8a"/><rect x="1303.4" y="0" width="1" height="7" fill="#9a9a9a"/><rect x="1316.6" y="4" width="1" height="3" fill="#8a8a8a"/><rect x="1329.9" y="4" width="1" height="3" fill="#8a8a8a"/><rect x="1343.1" y="4" width="1" height="3" fill="#8a8a8a"/><rect x="1356.4" y="4" width="1" height="3" fill="#8a8a8a"/><rect x="1369.6" y="0" width="1" height="7" fill="#9a9a9a"/><rect x="1382.8" y="4" width="1" height="3" fill="#8a8a8a"/><rect x="1396.1" y="4" width="1" height="3" fill="#8a8a8a"/><rect x="1409.3" y="4" width="1" height="3" fill="#8a8a8a"/><rect x="1422.6" y="4" width="1" height="3" fill="#8a8a8a"/><rect x="1435.8" y="0" width="1" height="7" fill="#9a9a9a"/><rect x="1449.0" y="4" width="1" height="3" fill="#8a8a8a"/><rect x="1462.3" y="4" width="1" height="3" fill="#8a8a8a"/><rect x="1475.5" y="4" width="1" height="3" fill="#8a8a8a"/><rect x="1488.8" y="4" width="1" height="3" fill="#8a8a8a"/><rect x="1502.0" y="0" width="1" height="7" fill="#9a9a9a"/><rect x="1515.2" y="4" width="1" height="3" fill="#8a8a8a"/><rect x="1528.5" y="4" width="1" height="3" fill="#8a8a8a"/><rect x="1541.7" y="4" width="1" height="3" fill="#8a8a8a"/><rect x="1555.0" y="4" width="1" height="3" fill="#8a8a8a"/><rect x="1568.2" y="0" width="1" height="7" fill="#9a9a9a"/><rect x="1581.4" y="4" width="1" height="3" fill="#8a8a8a"/></svg>
<div class="a t" style="left:545.7px;top:107px;width:60px;text-align:center;font-size:11px;color:#c4c4c4">-1600</div>
<div class="a t" style="left:611.9px;top:107px;width:60px;text-align:center;font-size:11px;color:#c4c4c4">-1400</div>
<div class="a t" style="left:678.1px;top:107px;width:60px;text-align:center;font-size:11px;color:#c4c4c4">-1200</div>
<div class="a t" style="left:744.3px;top:107px;width:60px;text-align:center;font-size:11px;color:#c4c4c4">-1000</div>
<div class="a t" style="left:810.5px;top:107px;width:60px;text-align:center;font-size:11px;color:#c4c4c4">-800</div>
<div class="a t" style="left:876.7px;top:107px;width:60px;text-align:center;font-size:11px;color:#c4c4c4">-600</div>
<div class="a t" style="left:942.9px;top:107px;width:60px;text-align:center;font-size:11px;color:#c4c4c4">-400</div>
<div class="a t" style="left:1009.1px;top:107px;width:60px;text-align:center;font-size:11px;color:#c4c4c4">-200</div>
<div class="a t" style="left:1075.3px;top:107px;width:60px;text-align:center;font-size:11px;color:#c4c4c4">0</div>
<div class="a t" style="left:1141.5px;top:107px;width:60px;text-align:center;font-size:11px;color:#c4c4c4">200</div>
<div class="a t" style="left:1207.7px;top:107px;width:60px;text-align:center;font-size:11px;color:#c4c4c4">400</div>
<div class="a t" style="left:1273.9px;top:107px;width:60px;text-align:center;font-size:11px;color:#c4c4c4">600</div>
<div class="a t" style="left:1340.1px;top:107px;width:60px;text-align:center;font-size:11px;color:#c4c4c4">800</div>
<div class="a t" style="left:1406.3px;top:107px;width:60px;text-align:center;font-size:11px;color:#c4c4c4">1000</div>
<div class="a t" style="left:1472.5px;top:107px;width:60px;text-align:center;font-size:11px;color:#c4c4c4">1200</div>
<div class="a t" style="left:1538.7px;top:107px;width:60px;text-align:center;font-size:11px;color:#c4c4c4">1400</div>
<div class="a t" style="left:535px;top:112px;color:#b0b0b0;font-size:11px;">px</div>
<svg class="a" style="left:542px;top:0px;" width="8" height="1029" viewBox="0 0 8 1029"><rect x="4" y="133.7" width="4" height="1" fill="#8a8a8a"/><rect x="4" y="146.9" width="4" height="1" fill="#8a8a8a"/><rect x="4" y="160.2" width="4" height="1" fill="#8a8a8a"/><rect x="0" y="173.4" width="8" height="1" fill="#9a9a9a"/><rect x="4" y="186.6" width="4" height="1" fill="#8a8a8a"/><rect x="4" y="199.9" width="4" height="1" fill="#8a8a8a"/><rect x="4" y="213.1" width="4" height="1" fill="#8a8a8a"/><rect x="4" y="226.4" width="4" height="1" fill="#8a8a8a"/><rect x="0" y="239.6" width="8" height="1" fill="#9a9a9a"/><rect x="4" y="252.8" width="4" height="1" fill="#8a8a8a"/><rect x="4" y="266.1" width="4" height="1" fill="#8a8a8a"/><rect x="4" y="279.3" width="4" height="1" fill="#8a8a8a"/><rect x="4" y="292.6" width="4" height="1" fill="#8a8a8a"/><rect x="0" y="305.8" width="8" height="1" fill="#9a9a9a"/><rect x="4" y="319.0" width="4" height="1" fill="#8a8a8a"/><rect x="4" y="332.3" width="4" height="1" fill="#8a8a8a"/><rect x="4" y="345.5" width="4" height="1" fill="#8a8a8a"/><rect x="4" y="358.8" width="4" height="1" fill="#8a8a8a"/><rect x="0" y="372.0" width="8" height="1" fill="#9a9a9a"/><rect x="4" y="385.2" width="4" height="1" fill="#8a8a8a"/><rect x="4" y="398.5" width="4" height="1" fill="#8a8a8a"/><rect x="4" y="411.7" width="4" height="1" fill="#8a8a8a"/><rect x="4" y="425.0" width="4" height="1" fill="#8a8a8a"/><rect x="0" y="438.2" width="8" height="1" fill="#9a9a9a"/><rect x="4" y="451.4" width="4" height="1" fill="#8a8a8a"/><rect x="4" y="464.7" width="4" height="1" fill="#8a8a8a"/><rect x="4" y="477.9" width="4" height="1" fill="#8a8a8a"/><rect x="4" y="491.2" width="4" height="1" fill="#8a8a8a"/><rect x="0" y="504.4" width="8" height="1" fill="#9a9a9a"/><rect x="4" y="517.6" width="4" height="1" fill="#8a8a8a"/><rect x="4" y="530.9" width="4" height="1" fill="#8a8a8a"/><rect x="4" y="544.1" width="4" height="1" fill="#8a8a8a"/><rect x="4" y="557.4" width="4" height="1" fill="#8a8a8a"/><rect x="0" y="570.6" width="8" height="1" fill="#9a9a9a"/><rect x="4" y="583.8" width="4" height="1" fill="#8a8a8a"/></svg>
<div class="a t" style="left:531px;top:541.1px;width:14px;height:60px;font-size:11px;color:#c4c4c4;writing-mode:vertical-rl;transform:rotate(180deg);text-align:center;line-height:14px">-600</div>
<div class="a t" style="left:531px;top:474.9px;width:14px;height:60px;font-size:11px;color:#c4c4c4;writing-mode:vertical-rl;transform:rotate(180deg);text-align:center;line-height:14px">-400</div>
<div class="a t" style="left:531px;top:408.7px;width:14px;height:60px;font-size:11px;color:#c4c4c4;writing-mode:vertical-rl;transform:rotate(180deg);text-align:center;line-height:14px">-200</div>
<div class="a t" style="left:531px;top:342.5px;width:14px;height:60px;font-size:11px;color:#c4c4c4;writing-mode:vertical-rl;transform:rotate(180deg);text-align:center;line-height:14px">0</div>
<div class="a t" style="left:531px;top:276.3px;width:14px;height:60px;font-size:11px;color:#c4c4c4;writing-mode:vertical-rl;transform:rotate(180deg);text-align:center;line-height:14px">200</div>
<div class="a t" style="left:531px;top:210.1px;width:14px;height:60px;font-size:11px;color:#c4c4c4;writing-mode:vertical-rl;transform:rotate(180deg);text-align:center;line-height:14px">400</div>
<div class="a t" style="left:531px;top:143.9px;width:14px;height:60px;font-size:11px;color:#c4c4c4;writing-mode:vertical-rl;transform:rotate(180deg);text-align:center;line-height:14px">600</div>
<div class="a t" style="left:570px;top:501px;color:#e8e8e8;font-size:12px">Hold S <span style="color:#4e4e4e">Direct Layer Selection</span></div>
<div class="a t" style="left:570px;top:515px;color:#e8e8e8;font-size:12px">Space <span style="color:#4e4e4e">Play/ Stop</span></div>
<div class="a t" style="left:570px;top:529px;color:#e8e8e8;font-size:12px">Space + click + drag <span style="color:#4e4e4e">Pan</span></div>
<div class="a t" style="left:570px;top:543px;color:#e8e8e8;font-size:12px">Alt + click + drag <span style="color:#4e4e4e">Move Pivot Point</span></div>
<div class="a t" style="left:570px;top:557px;color:#e8e8e8;font-size:12px">Shift <span style="color:#4e4e4e">Enable Snapping</span></div>
<div class="a t" style="left:998px;top:577px;color:#e8e8e8;font-size:12px;">Viewport Quality: High</div>
<div class="a " style="left:530px;top:598px;width:1057px;height:22px;background:#454545;"></div>
<div class="a " style="left:535px;top:600px;width:77px;height:17px;background:#2a2a2a;border-radius:3px"></div>
<div class="a t" style="left:538px;top:603px;color:#e6e6e6;font-size:12px;">33%</div>
<svg class="a" style="left:598px;top:605px;" width="10" height="6" viewBox="0 0 10 6"><path d="M1 1 L5 5 L9 1" stroke="#bbb" stroke-width="1" fill="none"/></svg>
<div class="a " style="left:867px;top:600px;width:99px;height:19px;background:#2c2c2c;border-radius:4px;border:1px solid #252525"></div>
<div class="a " style="left:887px;top:601px;width:1px;height:17px;background:#232323;"></div>
<div class="a " style="left:907px;top:601px;width:1px;height:17px;background:#232323;"></div>
<div class="a " style="left:926px;top:601px;width:1px;height:17px;background:#232323;"></div>
<div class="a " style="left:946px;top:601px;width:1px;height:17px;background:#232323;"></div>
<svg class="a" style="left:869px;top:603px;" width="96" height="13" viewBox="0 0 96 13"><rect x="3" y="1" width="2" height="11" fill="#d0d0d0"/><path d="M12 1 V12 L5.5 6.5 Z" fill="#d0d0d0"/><path d="M30 1 V12 L23.5 6.5 Z" fill="#d0d0d0"/><rect x="31" y="1" width="2" height="11" fill="#d0d0d0"/><path d="M43 1 V12 L51 6.5 Z" fill="#d0d0d0"/><rect x="63" y="1" width="2" height="11" fill="#d0d0d0"/><path d="M66 1 V12 L72.5 6.5 Z" fill="#d0d0d0"/><path d="M82 1 V12 L88.5 6.5 Z" fill="#d0d0d0"/><rect x="89" y="1" width="2" height="11" fill="#d0d0d0"/></svg>
<div class="a " style="left:971px;top:600px;width:20px;height:19px;background:#2c2c2c;border-radius:4px;border:1px solid #252525"></div>
<svg class="a" style="left:974px;top:603px;" width="14" height="12" viewBox="0 0 14 12"><path d="M5 3 H1 V10 H13 V6" stroke="#d0d0d0" stroke-width="1" fill="none"/><path d="M8 0 L13 3 L8 6 Z" fill="#d0d0d0"/></svg>
<svg class="a" style="left:0;top:0" width="1920" height="1029"><defs><linearGradient id="ig" gradientUnits="userSpaceOnUse" x1="0" y1="0" x2="0" y2="60"><stop offset="0" stop-color="#33eb9c"/><stop offset="0.5" stop-color="#1cd0cc"/><stop offset="1" stop-color="#0ea6f7"/></linearGradient></defs><g transform="translate(843,342)"><path d="M0 5 H12 L10 10.2 H5 V55 H55 V10.2 H50 L48 5 H60 V60 H0 Z" fill="url(#ig)"/><path d="M5 14 H10 L12 19 H5 Z M55 14 H50 L48 19 H55 Z" fill="url(#ig)"/><path d="M16.5 11.8 Q30 -7.2 43.2 11.8 Q30 31 16.5 11.8 Z" stroke="url(#ig)" fill="none" stroke-width="4.6"/><clipPath id="c1"><path d="M16.5 11.8 Q30 -7.2 43.2 11.8 Q30 31 16.5 11.8 Z"/></clipPath><circle cx="30" cy="8.3" r="7.5" fill="url(#ig)" clip-path="url(#c1)"/><circle cx="30.3" cy="7.2" r="2.3" fill="#0c0c0c"/><circle cx="21" cy="34.6" r="4.6" stroke="url(#ig)" fill="none" stroke-width="4.6"/><path d="M12.3 50 Q12.8 42 21 42 Q29.2 42 29.7 50" stroke="url(#ig)" fill="none" stroke-width="4.6"/><path d="M37 29.5 H51 M37 38.6 H51 M37 47.8 H51" stroke="url(#ig)" fill="none" stroke-width="4.6"/></g><g transform="translate(936,342)"><rect x="2.5" y="2.5" width="55" height="55" stroke="url(#ig)" fill="none" stroke-width="5"/><path d="M0 16.5 H60" stroke="url(#ig)" fill="none" stroke-width="5"/><path d="M10.3 5 h5 v5 h-5 Z M19.6 5 h5 v5 h-5 Z M29 5 h5 v5 h-5 Z" fill="url(#ig)"/><circle cx="24" cy="33.7" r="6.8" stroke="url(#ig)" fill="none" stroke-width="4.6"/><path d="M12.4 46 L19 39.5" stroke="url(#ig)" fill="none" stroke-width="4.6"/><path d="M40 27.3 H50 M40 37 H50 M40 46.5 H50" stroke="url(#ig)" fill="none" stroke-width="4.6"/></g><g transform="translate(1029,342)"><path d="M2.5 10 V45.5 H57 V10" stroke="url(#ig)" fill="none" stroke-width="5"/><rect x="11.7" y="2.5" width="35.7" height="31.8" stroke="url(#ig)" fill="none" stroke-width="5"/><circle cx="30" cy="16.6" r="4.6" stroke="url(#ig)" fill="none" stroke-width="4.6"/><path d="M19.8 36 V32 Q19.8 25.8 29.5 25.8 Q39.5 25.8 39.5 32 V36" stroke="url(#ig)" fill="none" stroke-width="4.6"/><path d="M20.2 48 h5 v7 h-5 Z M34.4 48 h5 v7 h-5 Z M13 55 h33 v5 h-33 Z" fill="url(#ig)"/></g><g transform="translate(1122,342)"><path d="M0 14 H11.6 L15 19 H4.3 V55 H54 V19 H44.4 L46.3 14 H59 V60 H0 Z" fill="url(#ig)"/><path d="M29.5 22.3 L19.5 12.3 Q16.5 9 18.5 6 Q20.5 2.7 24 2.7 Q27.5 2.7 29.5 6 Q31.5 2.7 35 2.7 Q38.5 2.7 40.5 6 Q42.5 9 39.5 12.3 Z" stroke="url(#ig)" fill="none" stroke-width="4.6" stroke-linejoin="miter"/><circle cx="43.2" cy="30.5" r="4.5" stroke="url(#ig)" fill="none" stroke-width="4.6"/><clipPath id="c4"><rect x="4" y="18" width="50" height="37"/></clipPath><g clip-path="url(#c4)"><path d="M2 40.5 L9.7 33.5 L32 56" stroke="url(#ig)" fill="none" stroke-width="5"/><path d="M17.5 39.5 L23.9 33.5 L46.5 56" stroke="url(#ig)" fill="none" stroke-width="5"/></g></g><g transform="translate(1214,342)"><path d="M16 16.5 H7.5 V47 M44 16.5 H52.5 V47" stroke="url(#ig)" fill="none" stroke-width="5"/><path d="M2.3 48.5 H57.5 V54.5 Q57.5 57.2 54.5 57.2 H5.3 Q2.3 57.2 2.3 54.5 Z" stroke="url(#ig)" fill="none" stroke-width="4.6"/><path d="M28 0 h4 v5.5 h-4 Z M28 29 h4 v6 h-4 Z" fill="url(#ig)"/><path fill-rule="evenodd" d="M16 30.2 V26.8 L21.7 21.8 V13.5 Q21.7 5.4 30.2 5.4 Q38.7 5.4 38.7 13.5 V21.8 L44.4 26.8 V30.2 Z M25.6 25.8 V14 Q25.6 10.1 30.2 10.1 Q34.8 10.1 34.8 14 V25.8 Z" fill="url(#ig)"/></g><g transform="translate(1307,342)"><path d="M2.6 18.2 V47.7 H21.5 L30 56 L38.5 47.7 H57.3 V18.2" stroke="url(#ig)" fill="none" stroke-width="4.6"/><circle cx="30.1" cy="20.5" r="18.1" stroke="url(#ig)" fill="none" stroke-width="4.6"/><path d="M23 13 h5 v5 h-5 Z M32.3 13 h5 v5 h-5 Z" fill="url(#ig)"/><path d="M22.4 24.8 Q30 35.5 37.6 24.8" stroke="url(#ig)" fill="none" stroke-width="4.6"/></g></svg>
<div class="a " style="left:1232px;top:600px;width:37px;height:18px;background:#2c2c2c;border-radius:3px"></div>
<svg class="a" style="left:1234px;top:604px;" width="14" height="10" viewBox="0 0 14 10"><path d="M4 0 H14 V10 H4 L0 5 Z" fill="#d8d8d8"/><circle cx="5" cy="5" r="1.6" fill="#2c2c2c"/></svg>
<div class="a t" style="left:1257px;top:603px;color:#8aa8d0;font-size:12px;">0</div>
<div class="a " style="left:1272px;top:600px;width:31px;height:18px;background:#2c2c2c;border-radius:3px;border:1px solid #252525"></div>
<div class="a " style="left:1291px;top:601px;width:1px;height:16px;background:#444;"></div>
<svg class="a" style="left:1275px;top:603px;" width="14" height="12" viewBox="0 0 14 12"><path d="M0 4 H3 L7 0.5 V11.5 L3 8 H0 Z" fill="#35d07f"/><path d="M9 3 Q11 6 9 9 M11 1 Q14 6 11 11" stroke="#35d07f" stroke-width="1.2" fill="none"/></svg>
<svg class="a" style="left:1294px;top:605px;" width="7" height="8" viewBox="0 0 7 8"><path d="M0 0 L6 4 L0 8 Z" stroke="#8a8a8a" stroke-width="1" fill="none"/></svg>
<div class="a " style="left:1307px;top:600px;width:31px;height:18px;background:#2c2c2c;border-radius:3px;border:1px solid #252525"></div>
<div class="a " style="left:1326px;top:601px;width:1px;height:16px;background:#444;"></div>
<svg class="a" style="left:1311px;top:603px;" width="12" height="12" viewBox="0 0 12 12"><path d="M2 10 V6 A4 4 0 0 1 10 6 V8" stroke="#ddd" stroke-width="2.2" fill="none"/></svg>
<svg class="a" style="left:1329px;top:605px;" width="7" height="8" viewBox="0 0 7 8"><path d="M0 0 L6 4 L0 8 Z" stroke="#8a8a8a" stroke-width="1" fill="none"/></svg>
<div class="a " style="left:1342px;top:600px;width:31px;height:18px;background:#2c2c2c;border-radius:3px;border:1px solid #252525"></div>
<div class="a " style="left:1361px;top:601px;width:1px;height:16px;background:#444;"></div>
<svg class="a" style="left:1344px;top:602px;" width="15" height="15" viewBox="0 0 15 15"><path d="M5 1 V14 M10 1 V14 M1 5 H14 M1 10 H14" stroke="#ddd" stroke-width="1.1"/></svg>
<svg class="a" style="left:1364px;top:605px;" width="7" height="8" viewBox="0 0 7 8"><path d="M0 0 L6 4 L0 8 Z" stroke="#8a8a8a" stroke-width="1" fill="none"/></svg>
<div class="a " style="left:1377px;top:600px;width:20px;height:18px;background:#2c2c2c;border-radius:3px"></div>
<svg class="a" style="left:1379px;top:603px;" width="16" height="12" viewBox="0 0 16 12"><rect x="0" y="1" width="3" height="3" fill="#35d07f"/><rect x="5" y="0.5" width="10" height="6" fill="none" stroke="#35d07f"/><rect x="0" y="6" width="3" height="6" fill="#35d07f"/><rect x="5" y="8" width="11" height="4" fill="#35d07f"/></svg>
<div class="a " style="left:1401px;top:600px;width:19px;height:18px;background:#2c2c2c;border-radius:3px"></div>
<svg class="a" style="left:1403px;top:604px;" width="15" height="10" viewBox="0 0 15 10"><path d="M0 0 L4 5 L0 10 H3 L7 5 L3 0 Z M5 0 L9 5 L5 10 H8 L12 5 L8 0 Z" fill="#bbb"/><path d="M10 0 L14 5 L10 10" stroke="#bbb" stroke-width="1.5" fill="none"/></svg>
<div class="a " style="left:1424px;top:600px;width:31px;height:18px;background:#2c2c2c;border-radius:3px;border:1px solid #252525"></div>
<div class="a " style="left:1443px;top:601px;width:1px;height:16px;background:#444;"></div>
<svg class="a" style="left:1427px;top:603px;" width="14" height="12" viewBox="0 0 14 12"><rect x="0.5" y="0.5" width="13" height="10" fill="none" stroke="#ddd"/><rect x="0" y="10" width="14" height="2" fill="#ddd"/></svg>
<svg class="a" style="left:1446px;top:605px;" width="7" height="8" viewBox="0 0 7 8"><path d="M0 0 L6 4 L0 8 Z" stroke="#8a8a8a" stroke-width="1" fill="none"/></svg>
<div class="a " style="left:1459px;top:600px;width:31px;height:18px;background:#2c2c2c;border-radius:3px;border:1px solid #252525"></div>
<div class="a " style="left:1478px;top:601px;width:1px;height:16px;background:#444;"></div>
<svg class="a" style="left:1461px;top:602px;" width="14" height="14" viewBox="0 0 14 14"><rect x="0.5" y="0.5" width="8" height="6" fill="none" stroke="#ccc"/><path d="M2 8.5 H10.5 V3 M4 10.5 H12.5 V5 M6 12.5 H14 V7" stroke="#999" fill="none"/></svg>
<svg class="a" style="left:1481px;top:605px;" width="7" height="8" viewBox="0 0 7 8"><path d="M0 0 L6 4 L0 8 Z" stroke="#8a8a8a" stroke-width="1" fill="none"/></svg>
<div class="a " style="left:1493px;top:600px;width:31px;height:18px;background:#2c2c2c;border-radius:3px;border:1px solid #252525"></div>
<div class="a " style="left:1512px;top:601px;width:1px;height:16px;background:#444;"></div>
<svg class="a" style="left:1496px;top:602px;" width="14" height="14" viewBox="0 0 14 14"><rect x="0" y="0" width="8" height="8" fill="#bbb"/><rect x="5.5" y="5.5" width="8" height="8" fill="#2c2c2c" stroke="#ddd"/></svg>
<svg class="a" style="left:1515px;top:605px;" width="7" height="8" viewBox="0 0 7 8"><path d="M0 0 L6 4 L0 8 Z" stroke="#8a8a8a" stroke-width="1" fill="none"/></svg>
<div class="a " style="left:1528px;top:600px;width:31px;height:18px;background:#2c2c2c;border-radius:3px;border:1px solid #252525"></div>
<div class="a " style="left:1547px;top:601px;width:1px;height:16px;background:#444;"></div>
<svg class="a" style="left:1531px;top:603px;" width="12" height="12" viewBox="0 0 12 12"><rect x="0.0" y="0.0" width="2.4" height="2.4" fill="#35d07f"/><rect x="0.0" y="4.8" width="2.4" height="2.4" fill="#35d07f"/><rect x="0.0" y="9.6" width="2.4" height="2.4" fill="#35d07f"/><rect x="2.4" y="2.4" width="2.4" height="2.4" fill="#35d07f"/><rect x="2.4" y="7.2" width="2.4" height="2.4" fill="#35d07f"/><rect x="4.8" y="0.0" width="2.4" height="2.4" fill="#35d07f"/><rect x="4.8" y="4.8" width="2.4" height="2.4" fill="#35d07f"/><rect x="4.8" y="9.6" width="2.4" height="2.4" fill="#35d07f"/><rect x="7.2" y="2.4" width="2.4" height="2.4" fill="#35d07f"/><rect x="7.2" y="7.2" width="2.4" height="2.4" fill="#35d07f"/><rect x="9.6" y="0.0" width="2.4" height="2.4" fill="#35d07f"/><rect x="9.6" y="4.8" width="2.4" height="2.4" fill="#35d07f"/><rect x="9.6" y="9.6" width="2.4" height="2.4" fill="#35d07f"/></svg>
<svg class="a" style="left:1550px;top:605px;" width="7" height="8" viewBox="0 0 7 8"><path d="M0 0 L6 4 L0 8 Z" stroke="#8a8a8a" stroke-width="1" fill="none"/></svg>
<div class="a " style="left:1564px;top:600px;width:19px;height:18px;background:#2c2c2c;border-radius:3px;border:1px solid #252525"></div>
<svg class="a" style="left:1567px;top:602px;" width="14" height="14" viewBox="0 0 14 14"><circle cx="7" cy="7" r="3.8" stroke="#e0e0e0" stroke-width="2.6" fill="none"/><rect x="6" y="0" width="2" height="3" fill="#e0e0e0" transform="rotate(0 7 7)"/><rect x="6" y="0" width="2" height="3" fill="#e0e0e0" transform="rotate(45 7 7)"/><rect x="6" y="0" width="2" height="3" fill="#e0e0e0" transform="rotate(90 7 7)"/><rect x="6" y="0" width="2" height="3" fill="#e0e0e0" transform="rotate(135 7 7)"/><rect x="6" y="0" width="2" height="3" fill="#e0e0e0" transform="rotate(180 7 7)"/><rect x="6" y="0" width="2" height="3" fill="#e0e0e0" transform="rotate(225 7 7)"/><rect x="6" y="0" width="2" height="3" fill="#e0e0e0" transform="rotate(270 7 7)"/><rect x="6" y="0" width="2" height="3" fill="#e0e0e0" transform="rotate(315 7 7)"/></svg>
<div class="a " style="left:1593px;top:85px;width:321px;height:22px;background:#1c1c1c;"></div>
<div class="a " style="left:1593px;top:85px;width:40px;height:22px;background:#434343;border-radius:4px 4px 0 0"></div>
<div class="a t" style="left:1598px;top:90px;color:#d8d8d8;font-size:12px;">Color</div>
<div class="a " style="left:1634px;top:85px;width:70px;height:22px;background:#1f1f1f;border-radius:4px 4px 0 0"></div>
<div class="a t" style="left:1639px;top:90px;color:#e6e6e6;font-size:12px;">Add Layers</div>
<div class="a " style="left:1593px;top:107px;width:321px;height:417px;background:#434343;"></div>
<div class="a " style="left:1900px;top:107px;width:14px;height:417px;background:#2e2e2e;"></div>
<div class="a " style="left:1902px;top:108px;width:10px;height:368px;background:#4e4e4e;border-radius:5px"></div>
<div class="a" style="left:1645.5px;top:119.7px;width:200px;height:200px;border-radius:50%;background:conic-gradient(from 90deg,#f00,#f0f,#00f,#0ff,#0f0,#ff0,#f00);-webkit-mask:radial-gradient(circle,transparent 74px,#000 75px,#000 99.5px,transparent 100.5px);mask:radial-gradient(circle,transparent 74px,#000 75px,#000 99.5px,transparent 100.5px)"></div>
<div class="a" style="left:1702px;top:176px;width:90px;height:90px;background:linear-gradient(to right,#000,rgba(0,0,0,0)),linear-gradient(to bottom,#fff,#f00)"></div>
<svg class="a" style="left:1731px;top:170px;" width="12" height="12" viewBox="0 0 12 12"><circle cx="6" cy="6" r="5.2" stroke="#ddd" stroke-width="1.2" fill="none"/></svg>
<svg class="a" style="left:1827px;top:213.5px;" width="12" height="12" viewBox="0 0 12 12"><circle cx="6" cy="6" r="5.2" stroke="#fff" stroke-width="1.2" fill="none"/></svg>
<div class="a " style="left:1600px;top:333px;width:22px;height:22px;background:#646464;border-radius:3px"></div>
<div class="a t" style="left:1625px;top:339px;color:#e6e6e6;font-size:12px;">Dim Gray</div>
<div class="a " style="left:1871px;top:333px;width:22px;height:22px;background:#2a2a2a;border-radius:3px;border:1px solid #222"></div>
<svg class="a" style="left:1876px;top:338px;" width="13" height="13" viewBox="0 0 13 13"><path d="M1.8 11.2 L2.3 9.6 L7.6 4.3 L9.2 5.9 L3.9 11.2 Z" stroke="#d8d8d8" stroke-width="0.9" fill="none"/><path d="M7 3.2 L10.3 6.5" stroke="#d8d8d8" stroke-width="1.6"/><circle cx="10.3" cy="3.2" r="2.3" fill="#d8d8d8"/></svg>
<div class="a " style="left:1600px;top:360px;width:50px;height:18px;background:#3b3b3b;border-radius:3px;border:1px solid #2a2a2a"></div>
<div class="a t" style="left:1603px;top:363px;color:#e6e6e6;font-size:12px;">Hex</div>
<svg class="a" style="left:1635px;top:366px;" width="10" height="6" viewBox="0 0 10 6"><path d="M1 1 L5 5 L9 1" stroke="#bbb" stroke-width="1" fill="none"/></svg>
<div class="a " style="left:1653px;top:358px;width:240px;height:22px;background:#2a2a2a;border-radius:3px"></div>
<div class="a t" style="left:1660px;top:363px;color:#5a5a5a;font-size:11px;">#</div>
<div class="a t" style="left:1671px;top:363px;color:#e6e6e6;font-size:12px;">646464</div>
<div class="a " style="left:1600px;top:390px;width:234px;height:4px;background:#e6e6e6;border-radius:2px"></div>
<svg class="a" style="left:1827px;top:385px;" width="14" height="14" viewBox="0 0 14 14"><circle cx="7" cy="7" r="6" fill="#70c5a8"/><circle cx="7" cy="7" r="2.2" fill="#5aa58c"/></svg>
<div class="a " style="left:1849px;top:384px;width:44px;height:16px;background:#2a2a2a;border-radius:3px"></div>
<div class="a t" style="left:1853px;top:387px;color:#555;font-size:12px;">A</div>
<div class="a t" style="left:1866px;top:387px;color:#e6e6e6;font-size:12px;">255</div>
<div class="a " style="left:1597px;top:406px;width:299px;height:22px;background:#262626;"></div>
<div class="a " style="left:1599px;top:408px;width:148px;height:20px;background:#434343;border-radius:4px 4px 0 0"></div>
<div class="a " style="left:1747px;top:408px;width:148px;height:20px;background:#292929;border-radius:4px 4px 0 0"></div>
<div class="a t" style="left:1648px;top:411px;color:#e6e6e6;font-size:12px;">Swatches</div>
<div class="a t" style="left:1793px;top:411px;color:#c0c0c0;font-size:12px;">Generator</div>
<div class="a " style="left:1597px;top:428px;width:299px;height:96px;background:#262626;"></div>
<div class="a " style="left:1598px;top:430px;width:257px;height:19px;background:#3f3f3f;border-radius:3px"></div>
<div class="a " style="left:1599px;top:431px;width:63px;height:17px;background:#2a2a2a;border-radius:3px"></div>
<svg class="a" style="left:1605px;top:434px;" width="10" height="11" viewBox="0 0 10 11"><path d="M1 0 V11 M4 0 V11 M6 0 L9.5 11" stroke="#35d07f" stroke-width="1.5"/></svg>
<div class="a t" style="left:1620px;top:434px;color:#e6e6e6;font-size:12px;">Library</div>
<svg class="a" style="left:1671px;top:434px;" width="11" height="11" viewBox="0 0 11 11"><path d="M0 1 H4 L5 2 H11 V11 H0 Z" fill="#bbb"/><path d="M2 5 H9 M2 7.5 H9" stroke="#3b3b3b"/></svg>
<div class="a t" style="left:1686px;top:434px;color:#e0e0e0;font-size:12px;">Project</div>
<svg class="a" style="left:1739px;top:433px;" width="10" height="12" viewBox="0 0 10 12"><path d="M0.5 0.5 H6 L9.5 4 V11.5 H0.5 Z" fill="none" stroke="#bbb"/></svg>
<div class="a t" style="left:1752px;top:434px;color:#e0e0e0;font-size:12px;">Scene</div>
<svg class="a" style="left:1800px;top:433px;" width="12" height="12" viewBox="0 0 12 12"><path d="M6 0.8 H11.2 V6 L6 11.2 A5.2 5.2 0 0 1 6 0.8 Z" fill="none" stroke="#bbb"/></svg>
<div class="a t" style="left:1815px;top:434px;color:#e0e0e0;font-size:12px;">Labels</div>
<div class="a " style="left:1858px;top:430px;width:37px;height:19px;background:#3f3f3f;border-radius:3px"></div>
<div class="a " style="left:1859px;top:431px;width:17px;height:17px;background:#2a2a2a;border-radius:3px"></div>
<svg class="a" style="left:1862px;top:434px;" width="11" height="11" viewBox="0 0 11 11"><rect x="1" y="1" width="3.5" height="3.5" fill="#35d07f"/><rect x="6.5" y="1" width="3.5" height="3.5" fill="#35d07f"/><rect x="1" y="6.5" width="3.5" height="3.5" fill="#35d07f"/><rect x="6.5" y="6.5" width="3.5" height="3.5" fill="#35d07f"/></svg>
<svg class="a" style="left:1880px;top:434px;" width="12" height="11" viewBox="0 0 12 11"><path d="M0 1 H12 M0 5.5 H12 M0 10 H12" stroke="#ccc" stroke-width="1.1"/></svg>
<div class="a " style="left:1598px;top:453px;width:275px;height:17px;background:#434343;border-radius:2px;border:1px solid #333"></div>
<div class="a t" style="left:1601px;top:455px;color:#e6e6e6;font-size:12px;">Simple</div>
<svg class="a" style="left:1859px;top:458px;" width="10" height="6" viewBox="0 0 10 6"><path d="M1 1 L5 5 L9 1" stroke="#bbb" stroke-width="1" fill="none"/></svg>
<div class="a " style="left:1880px;top:460px;width:2px;height:2px;background:#ccc;"></div>
<div class="a " style="left:1885px;top:460px;width:2px;height:2px;background:#ccc;"></div>
<div class="a " style="left:1890px;top:460px;width:2px;height:2px;background:#ccc;"></div>
<div class="a " style="left:1600px;top:472px;width:18px;height:18px;background:#1473c6;border-radius:3px"></div>
<div class="a " style="left:1622px;top:472px;width:18px;height:18px;background:#10a0e0;border-radius:3px"></div>
<div class="a " style="left:1644px;top:472px;width:18px;height:18px;background:#8cc063;border-radius:3px"></div>
<div class="a " style="left:1666px;top:472px;width:18px;height:18px;background:#f0e040;border-radius:3px"></div>
<div class="a " style="left:1688px;top:472px;width:18px;height:18px;background:#f07010;border-radius:3px"></div>
<div class="a " style="left:1593px;top:524px;width:321px;height:6px;background:#171717;"></div>
<div class="a " style="left:1593px;top:530px;width:321px;height:22px;background:#1c1c1c;"></div>
<div class="a " style="left:1593px;top:530px;width:38px;height:22px;background:#434343;border-radius:4px 4px 0 0"></div>
<div class="a t" style="left:1598px;top:535px;color:#e6e6e6;font-size:12px;">Align</div>
<div class="a " style="left:1593px;top:552px;width:321px;height:68px;background:#434343;"></div>
<div class="a t" style="left:1601px;top:565px;color:#e6e6e6;font-size:12px;">Alignment</div>
<div class="a t" style="left:1601px;top:593px;color:#e6e6e6;font-size:12px;">Distribution</div>
<div class="a " style="left:1791px;top:562px;width:53px;height:18px;background:#262626;border-radius:4px;border:1px solid #222"></div>
<div class="a " style="left:1808px;top:563px;width:1px;height:16px;background:#444;"></div>
<div class="a " style="left:1826px;top:563px;width:1px;height:16px;background:#444;"></div>
<div class="a " style="left:1853px;top:562px;width:53px;height:18px;background:#262626;border-radius:4px;border:1px solid #222"></div>
<div class="a " style="left:1870px;top:563px;width:1px;height:16px;background:#444;"></div>
<div class="a " style="left:1888px;top:563px;width:1px;height:16px;background:#444;"></div>
<div class="a " style="left:1791px;top:590px;width:53px;height:18px;background:#262626;border-radius:4px;border:1px solid #222"></div>
<div class="a " style="left:1808px;top:591px;width:1px;height:16px;background:#444;"></div>
<div class="a " style="left:1826px;top:591px;width:1px;height:16px;background:#444;"></div>
<svg class="a" style="left:1791px;top:562px;" width="53" height="18" viewBox="0 0 53 18"><path d="M3.5 3 V15" stroke="#e6e6e6"/><path d="M5 6.5 H10 M5 11.5 H14" stroke="#e6e6e6" stroke-width="2"/><path d="M27 3 V15" stroke="#e6e6e6"/><path d="M22 6.5 H32 M23 11.5 H31" stroke="#e6e6e6" stroke-width="2"/><path d="M50 3 V15" stroke="#e6e6e6"/><path d="M44 6.5 H49 M40 11.5 H49" stroke="#e6e6e6" stroke-width="2"/></svg>
<svg class="a" style="left:1853px;top:562px;" width="53" height="18" viewBox="0 0 53 18"><path d="M3 3.5 H15" stroke="#e6e6e6"/><path d="M6.5 5 V10 M11.5 5 V14" stroke="#e6e6e6" stroke-width="2"/><path d="M21 9 H33" stroke="#e6e6e6"/><path d="M24.5 4 V14 M29.5 5 V13" stroke="#e6e6e6" stroke-width="2"/><path d="M39 14.5 H51" stroke="#e6e6e6"/><path d="M42.5 8 V13 M47.5 4 V13" stroke="#e6e6e6" stroke-width="2"/></svg>
<svg class="a" style="left:1791px;top:590px;" width="53" height="18" viewBox="0 0 53 18"><path d="M3.5 3 V15 M14.5 3 V15" stroke="#e6e6e6"/><path d="M9 5 V13" stroke="#e6e6e6" stroke-width="2"/><path d="M21 3.5 H33 M21 14.5 H33" stroke="#e6e6e6"/><path d="M23 9 H31" stroke="#e6e6e6" stroke-width="2"/><path d="M39 8 V15 H42 M50 3 H47 M50 3 V7" stroke="#e6e6e6" stroke-dasharray="2 1.5" fill="none"/><path d="M44 9 V12 M47 7 V10" stroke="#e6e6e6" stroke-width="1.5"/></svg>
<div class="a " style="left:494px;top:620px;width:1420px;height:6px;background:#171717;"></div>
<div class="a " style="left:494px;top:626px;width:1420px;height:22px;background:#1c1c1c;"></div>
<div class="a " style="left:494px;top:626px;width:89px;height:22px;background:#434343;border-radius:4px 4px 0 0"></div>
<div class="a t" style="left:499px;top:631px;color:#e6e6e6;font-size:12px;">Scene Window</div>
<div class="a " style="left:584px;top:626px;width:100px;height:22px;background:#202020;border-radius:4px 4px 0 0"></div>
<div class="a t" style="left:589px;top:631px;color:#e6e6e6;font-size:12px;">JavaScript Editor</div>
<div class="a " style="left:685px;top:626px;width:112px;height:22px;background:#202020;border-radius:4px 4px 0 0"></div>
<div class="a t" style="left:690px;top:631px;color:#e6e6e6;font-size:12px;">Dependency Graph</div>
<div class="a " style="left:494px;top:648px;width:1420px;height:352px;background:#262626;"></div>
<div class="a " style="left:494px;top:650px;width:4px;height:20px;background:#262626;"></div>
<div class="a " style="left:498px;top:650px;width:1411px;height:20px;background:#434343;border-radius:4px 4px 0 0"></div>
<div class="a t" style="left:1166px;top:653px;color:#dcdcdc;font-size:12px;">Composition 1</div>
<div class="a " style="left:494px;top:670px;width:524px;height:305px;background:#2a2a2a;"></div>
<div class="a " style="left:494px;top:670px;width:524px;height:42px;background:#3c3c3c;"></div>
<div class="a " style="left:496px;top:672px;width:315px;height:20px;background:#262626;border-radius:10px"></div>
<svg class="a" style="left:500px;top:675px;" width="13" height="13" viewBox="0 0 13 13"><circle cx="5.5" cy="5.5" r="4.5" stroke="#e6e6e6" stroke-width="1.2" fill="none"/><path d="M9 9 L12 12" stroke="#e6e6e6" stroke-width="2"/></svg>
<div class="a t" style="left:520px;top:676px;color:#8c8c8c;font-size:12px;">Enter a layer name</div>
<div class="a " style="left:813px;top:673px;width:20px;height:19px;background:#2c2c2c;border-radius:3px;border:1px solid #222"></div>
<svg class="a" style="left:817px;top:677px;" width="12" height="12" viewBox="0 0 12 12"><path d="M6 0 V12 M0 6 H12" stroke="#eee" stroke-width="1.8"/></svg>
<div class="a " style="left:857px;top:673px;width:20px;height:19px;background:#2c2c2c;border-radius:3px;border:1px solid #222"></div>
<div class="a " style="left:879px;top:673px;width:20px;height:19px;background:#2c2c2c;border-radius:3px;border:1px solid #222"></div>
<div class="a " style="left:901px;top:673px;width:20px;height:19px;background:#2c2c2c;border-radius:3px;border:1px solid #222"></div>
<svg class="a" style="left:860px;top:676px;" width="14" height="14" viewBox="0 0 14 14"><circle cx="8" cy="6" r="5" fill="#ddd"/><path d="M3 9 A5 5 0 0 0 9 13" stroke="#888" stroke-width="1.5" fill="none"/><path d="M1 7 A6 6 0 0 0 6 13" stroke="#666" stroke-width="1" fill="none"/></svg>
<svg class="a" style="left:882px;top:676px;" width="14" height="14" viewBox="0 0 14 14"><circle cx="2" cy="2" r="1" fill="#ddd"/><circle cx="7" cy="2" r="1" fill="#ddd"/><circle cx="2" cy="7" r="1" fill="#ddd"/><path d="M9 5 V13 M5 9 H13" stroke="#eee" stroke-width="1.6"/></svg>
<svg class="a" style="left:904px;top:676px;" width="14" height="14" viewBox="0 0 14 14"><path d="M1 2.5 H13 M1 7 H13 M1 11.5 H13" stroke="#bbb" stroke-width="0.8"/><circle cx="5" cy="2.5" r="1.6" fill="#2c2c2c" stroke="#ddd"/><circle cx="9" cy="7" r="1.6" fill="#2c2c2c" stroke="#ddd"/><circle cx="6" cy="11.5" r="1.6" fill="#2c2c2c" stroke="#ddd"/></svg>
<div class="a " style="left:923px;top:673px;width:94px;height:19px;background:#2c2c2c;border-radius:3px"></div>
<div class="a t" style="left:928px;top:676px;color:#555;font-size:12px;">F</div>
<div class="a t" style="left:940px;top:676px;color:#e6e6e6;font-size:12px;">0</div>
<div class="a " style="left:494px;top:693px;width:514px;height:19px;background:#434343;"></div>
<svg class="a" style="left:499px;top:697px;" width="12" height="12" viewBox="0 0 12 12"><rect x="1" y="5" width="10" height="7" rx="1" fill="#d0d0d0"/><path d="M3 5 V3.5 A3 3 0 0 1 9 3.5 V5" stroke="#d0d0d0" stroke-width="1.4" fill="none"/></svg>
<svg class="a" style="left:517px;top:698px;" width="14" height="10" viewBox="0 0 14 10"><path d="M0.5 5 Q7 -1.5 13.5 5 Q7 11.5 0.5 5 Z" fill="none" stroke="#d0d0d0" stroke-width="1.1"/><circle cx="7" cy="5" r="2" fill="#d0d0d0"/></svg>
<svg class="a" style="left:536px;top:696px;" width="14" height="14" viewBox="0 0 14 14"><path d="M7 1 L13 4 V10.5 L7 13.5 L1 10.5 V4 Z M1 4 L7 7 L13 4 M7 7 V13.5" stroke="#d0d0d0" stroke-width="1.1" fill="none"/></svg>
<svg class="a" style="left:555px;top:697px;" width="14" height="12" viewBox="0 0 14 12"><path d="M0 4 H3 L7 0.5 V11.5 L3 8 H0 Z" fill="#d0d0d0"/><path d="M9 3 Q11 6 9 9 M11 1 Q14 6 11 11" stroke="#d0d0d0" stroke-width="1.2" fill="none"/></svg>
<svg class="a" style="left:575px;top:696px;" width="13" height="13" viewBox="0 0 13 13"><path d="M1.8 11.2 L2.3 9.6 L7.6 4.3 L9.2 5.9 L3.9 11.2 Z" stroke="#d0d0d0" stroke-width="0.9" fill="none"/><path d="M7 3.2 L10.3 6.5" stroke="#d0d0d0" stroke-width="1.6"/><circle cx="10.3" cy="3.2" r="2.3" fill="#d0d0d0"/></svg>
<svg class="a" style="left:593px;top:698px;" width="14" height="10" viewBox="0 0 14 10"><path d="M4 0 H14 V10 H4 L0 5 Z" fill="#d8d8d8"/><circle cx="5" cy="5" r="1.6" fill="#333"/></svg>
<div class="a t" style="left:649px;top:697px;color:#e6e6e6;font-size:12px;">Name</div>
<div class="a " style="left:494px;top:712px;width:514px;height:154px;background:#333333;"></div>
<div class="a " style="left:1007px;top:712px;width:10px;height:250px;background:#484848;border-radius:5px"></div>
<div class="a " style="left:496px;top:713px;width:17px;height:20px;background:#2a2a2a;border-radius:2px"></div>
<div class="a " style="left:515px;top:713px;width:18px;height:20px;background:#2a2a2a;border-radius:2px"></div>
<svg class="a" style="left:518px;top:717px;" width="12" height="12" viewBox="0 0 12 12"><circle cx="6" cy="6" r="5" stroke="#ddd" stroke-width="1.1" fill="none"/><path d="M3.5 6 L5.5 8 L10 3" stroke="#ddd" stroke-width="1.4" fill="none"/></svg>
<div class="a " style="left:572px;top:714px;width:18px;height:18px;background:#5b8def;border-radius:4px;border:1px solid #1c1c1c"></div>
<svg class="a" style="left:593px;top:718px;" width="14" height="10" viewBox="0 0 14 10"><path d="M4 0 H14 V10 H4 L0 5 Z" fill="#d8d8d8"/><circle cx="5" cy="5" r="1.6" fill="#333"/></svg>
<svg class="a" style="left:649px;top:716px;" width="16" height="15" viewBox="0 0 16 15"><rect x="0.5" y="4.5" width="11" height="9" fill="none" stroke="#8ab4f8"/><path d="M2 12 L5 8 L7 10 L9 7 L11 12 Z" fill="#8ab4f8"/><path d="M4 1.5 H15 M6 4 H15 M13 6.5 H15 M13 9 H15" stroke="#8ab4f8" stroke-width="1.2"/></svg>
<div class="a t" style="left:667px;top:717px;color:#e8e8e8;font-size:12px;">Group Array</div>
<div class="a " style="left:965px;top:714px;width:21px;height:18px;background:#2a2a2a;border-radius:3px"></div>
<svg class="a" style="left:968px;top:718px;" width="15" height="10" viewBox="0 0 15 10"><path d="M6 0 V10 L1 5 Z" fill="#f0d870"/><path d="M9 0 V10 L14 5 Z" fill="#d050e8"/></svg>
<svg class="a" style="left:990px;top:717px;" width="12" height="12" viewBox="0 0 12 12"><circle cx="6" cy="6" r="5" stroke="#6a6a6a" stroke-width="1.1" fill="none"/></svg>
<div class="a " style="left:494px;top:734px;width:510px;height:22px;background:#4b4e3b;border-radius:0 3px 3px 0"></div>
<div class="a " style="left:496px;top:735px;width:17px;height:20px;background:#2a2a2a;border-radius:2px"></div>
<div class="a " style="left:515px;top:735px;width:18px;height:20px;background:#2a2a2a;border-radius:2px"></div>
<svg class="a" style="left:518px;top:739px;" width="12" height="12" viewBox="0 0 12 12"><circle cx="6" cy="6" r="5" stroke="#ddd" stroke-width="1.1" fill="none"/><path d="M3.5 6 L5.5 8 L10 3" stroke="#ddd" stroke-width="1.4" fill="none"/></svg>
<div class="a " style="left:572px;top:736px;width:18px;height:18px;background:#c4ec7e;border-radius:4px;border:1px solid #1c1c1c"></div>
<svg class="a" style="left:593px;top:740px;" width="14" height="10" viewBox="0 0 14 10"><path d="M4 0 H14 V10 H4 L0 5 Z" fill="#d8d8d8"/><circle cx="5" cy="5" r="1.6" fill="#333"/></svg>
<svg class="a" style="left:651px;top:740px;" width="12" height="10" viewBox="0 0 12 10"><path d="M1 1 H11 L6 9.5 Z" stroke="#4fd08a" stroke-width="1.3" fill="none"/></svg>
<div class="a t" style="left:667px;top:739px;color:#ececec;font-size:12px;">Value [Shape Scale]</div>
<div class="a " style="left:965px;top:736px;width:21px;height:18px;background:#2a2a2a;border-radius:3px"></div>
<svg class="a" style="left:968px;top:740px;" width="15" height="10" viewBox="0 0 15 10"><path d="M6 0 V10 L1 5 Z" fill="#777"/><path d="M9 0 V10 L14 5 Z" fill="#d050e8"/></svg>
<svg class="a" style="left:990px;top:739px;" width="12" height="12" viewBox="0 0 12 12"><circle cx="6" cy="6" r="5" stroke="#6a6a6a" stroke-width="1.1" fill="none"/></svg>
<div class="a " style="left:496px;top:757px;width:17px;height:20px;background:#2a2a2a;border-radius:2px"></div>
<div class="a " style="left:515px;top:757px;width:18px;height:20px;background:#2a2a2a;border-radius:2px"></div>
<div class="a " style="left:534px;top:757px;width:18px;height:20px;background:#2a2a2a;border-radius:2px"></div>
<svg class="a" style="left:517px;top:762px;" width="14" height="10" viewBox="0 0 14 10"><path d="M0.5 5 Q7 -1.5 13.5 5 Q7 11.5 0.5 5 Z" fill="none" stroke="#d0d0d0" stroke-width="1.1"/><circle cx="7" cy="5" r="2" fill="#d0d0d0"/></svg>
<div class="a " style="left:572px;top:758px;width:18px;height:18px;background:#ffe47e;border-radius:4px;border:1px solid #1c1c1c"></div>
<svg class="a" style="left:593px;top:762px;" width="14" height="10" viewBox="0 0 14 10"><path d="M4 0 H14 V10 H4 L0 5 Z" fill="#d8d8d8"/><circle cx="5" cy="5" r="1.6" fill="#333"/></svg>
<svg class="a" style="left:650px;top:760px;" width="14" height="14" viewBox="0 0 14 14"><rect x="0" y="0" width="2" height="2" fill="#f5e290"/><rect x="0" y="6" width="2" height="2" fill="#f5e290"/><rect x="0" y="12" width="2" height="2" fill="#f5e290"/><rect x="6" y="0" width="2" height="2" fill="#f5e290"/><rect x="6" y="6" width="2" height="2" fill="#f5e290"/><rect x="6" y="12" width="2" height="2" fill="#f5e290"/><rect x="12" y="0" width="2" height="2" fill="#f5e290"/><rect x="12" y="6" width="2" height="2" fill="#f5e290"/><rect x="12" y="12" width="2" height="2" fill="#f5e290"/></svg>
<div class="a t" style="left:667px;top:761px;color:#e8e8e8;font-size:12px;">Duplicator</div>
<div class="a " style="left:965px;top:758px;width:21px;height:18px;background:#2a2a2a;border-radius:3px"></div>
<div class="a " style="left:965px;top:758px;width:10px;height:18px;border:1px solid #b09a40;border-radius:2px"></div>
<svg class="a" style="left:968px;top:762px;" width="15" height="10" viewBox="0 0 15 10"><path d="M6 0 V10 L1 5 Z" fill="#f0d870"/><path d="M9 0 V10 L14 5 Z" fill="#888"/></svg>
<svg class="a" style="left:990px;top:761px;" width="12" height="12" viewBox="0 0 12 12"><circle cx="6" cy="6" r="5" stroke="#6a6a6a" stroke-width="1.1" fill="none"/></svg>
<div class="a " style="left:496px;top:779px;width:17px;height:20px;background:#2a2a2a;border-radius:2px"></div>
<div class="a " style="left:515px;top:779px;width:18px;height:20px;background:#2a2a2a;border-radius:2px"></div>
<div class="a " style="left:534px;top:779px;width:18px;height:20px;background:#2a2a2a;border-radius:2px"></div>
<div class="a " style="left:572px;top:780px;width:18px;height:18px;background:#ffe47e;border-radius:4px;border:1px solid #1c1c1c"></div>
<svg class="a" style="left:593px;top:784px;" width="14" height="10" viewBox="0 0 14 10"><path d="M4 0 H14 V10 H4 L0 5 Z" fill="#d8d8d8"/><circle cx="5" cy="5" r="1.6" fill="#333"/></svg>
<svg class="a" style="left:650px;top:782px;" width="14" height="14" viewBox="0 0 14 14"><rect x="0.5" y="0.5" width="13" height="13" fill="none" stroke="#e8d890" stroke-dasharray="3 2"/></svg>
<div class="a t" style="left:667px;top:783px;color:#9a9a9a;font-size:12px;">Basic Shape</div>
<svg class="a" style="left:990px;top:783px;" width="12" height="12" viewBox="0 0 12 12"><circle cx="6" cy="6" r="5" stroke="#6a6a6a" stroke-width="1.1" fill="none"/></svg>
<div class="a " style="left:496px;top:801px;width:17px;height:20px;background:#2a2a2a;border-radius:2px"></div>
<div class="a " style="left:515px;top:801px;width:18px;height:20px;background:#2a2a2a;border-radius:2px"></div>
<div class="a " style="left:534px;top:801px;width:18px;height:20px;background:#2a2a2a;border-radius:2px"></div>
<div class="a " style="left:572px;top:802px;width:18px;height:18px;background:#ffe47e;border-radius:4px;border:1px solid #1c1c1c"></div>
<svg class="a" style="left:593px;top:806px;" width="14" height="10" viewBox="0 0 14 10"><path d="M4 0 H14 V10 H4 L0 5 Z" fill="#d8d8d8"/><circle cx="5" cy="5" r="1.6" fill="#333"/></svg>
<div class="a " style="left:610px;top:801px;width:32px;height:20px;background:#2a2a2a;border-radius:2px"></div>
<svg class="a" style="left:613px;top:808px;" width="10" height="6" viewBox="0 0 10 6"><path d="M1 1 L5 5 L9 1" stroke="#888" stroke-width="1" fill="none"/></svg>
<svg class="a" style="left:648px;top:803px;" width="15" height="15" viewBox="0 0 15 15"><rect x="0.5" y="0.5" width="14" height="14" fill="#2a2a2a" stroke="#ecd878"/><rect x="2.5" y="2.5" width="10" height="10" fill="#d0d0d0"/><path d="M4 11 L6.5 7 L8 9 L9.5 8 L11 11 Z" fill="#2a2a2a"/><circle cx="10" cy="4.8" r="1.3" fill="#2a2a2a"/></svg>
<div class="a t" style="left:667px;top:805px;color:#a0a0a0;font-size:12px;">profile</div>
<div class="a " style="left:965px;top:802px;width:21px;height:18px;background:#2a2a2a;border-radius:3px"></div>
<svg class="a" style="left:968px;top:806px;" width="15" height="10" viewBox="0 0 15 10"><path d="M6 0 V10 L1 5 Z" fill="#f0d870"/><path d="M9 0 V10 L14 5 Z" fill="#d050e8"/></svg>
<svg class="a" style="left:990px;top:805px;" width="12" height="12" viewBox="0 0 12 12"><circle cx="6" cy="6" r="5" stroke="#6a6a6a" stroke-width="1.1" fill="none"/></svg>
<div class="a " style="left:496px;top:823px;width:17px;height:20px;background:#2a2a2a;border-radius:2px"></div>
<div class="a " style="left:515px;top:823px;width:18px;height:20px;background:#2a2a2a;border-radius:2px"></div>
<svg class="a" style="left:518px;top:827px;" width="12" height="12" viewBox="0 0 12 12"><circle cx="6" cy="6" r="5" stroke="#ddd" stroke-width="1.1" fill="none"/><path d="M3.5 6 L5.5 8 L10 3" stroke="#ddd" stroke-width="1.4" fill="none"/></svg>
<div class="a " style="left:572px;top:824px;width:18px;height:18px;background:#ff8ab2;border-radius:4px;border:1px solid #1c1c1c"></div>
<svg class="a" style="left:593px;top:828px;" width="14" height="10" viewBox="0 0 14 10"><path d="M4 0 H14 V10 H4 L0 5 Z" fill="#d8d8d8"/><circle cx="5" cy="5" r="1.6" fill="#333"/></svg>
<svg class="a" style="left:668px;top:824px;" width="17" height="17" viewBox="0 0 17 17"><rect x="0.5" y="4.5" width="12" height="11" fill="none" stroke="#ff7aa8"/><path d="M2 14 L5 10 L7 12 L9 9 L12 14 Z" fill="#ff7aa8"/><circle cx="12" cy="5" r="4" fill="#e6e6e6"/></svg>
<div class="a t" style="left:686px;top:827px;color:#e8e8e8;font-size:12px;">profile Image Shader</div>
<div class="a " style="left:965px;top:824px;width:21px;height:18px;background:#2a2a2a;border-radius:3px"></div>
<svg class="a" style="left:968px;top:828px;" width="15" height="10" viewBox="0 0 15 10"><path d="M6 0 V10 L1 5 Z" fill="#f0d870"/><path d="M9 0 V10 L14 5 Z" fill="#d050e8"/></svg>
<svg class="a" style="left:990px;top:827px;" width="12" height="12" viewBox="0 0 12 12"><circle cx="6" cy="6" r="5" stroke="#6a6a6a" stroke-width="1.1" fill="none"/></svg>
<div class="a " style="left:496px;top:845px;width:17px;height:20px;background:#2a2a2a;border-radius:2px"></div>
<div class="a " style="left:515px;top:845px;width:18px;height:20px;background:#2a2a2a;border-radius:2px"></div>
<div class="a " style="left:534px;top:845px;width:18px;height:20px;background:#2a2a2a;border-radius:2px"></div>
<svg class="a" style="left:517px;top:850px;" width="14" height="10" viewBox="0 0 14 10"><path d="M0.5 5 Q7 -1.5 13.5 5 Q7 11.5 0.5 5 Z" fill="none" stroke="#d0d0d0" stroke-width="1.1"/><circle cx="7" cy="5" r="2" fill="#d0d0d0"/></svg>
<div class="a " style="left:572px;top:846px;width:18px;height:18px;background:#ffe47e;border-radius:4px;border:1px solid #1c1c1c"></div>
<svg class="a" style="left:593px;top:850px;" width="14" height="10" viewBox="0 0 14 10"><path d="M4 0 H14 V10 H4 L0 5 Z" fill="#d8d8d8"/><circle cx="5" cy="5" r="1.6" fill="#333"/></svg>
<svg class="a" style="left:649px;top:847px;" width="15" height="15" viewBox="0 0 15 15"><rect x="0.5" y="0.5" width="14" height="14" fill="#333" stroke="#e6d690"/><rect x="2.5" y="2.5" width="10" height="10" fill="#cfcfcf"/></svg>
<div class="a t" style="left:667px;top:849px;color:#e8e8e8;font-size:12px;">Background Shape</div>
<svg class="a" style="left:990px;top:849px;" width="12" height="12" viewBox="0 0 12 12"><circle cx="6" cy="6" r="5" stroke="#6a6a6a" stroke-width="1.1" fill="none"/></svg>
<div class="a " style="left:632px;top:733px;width:183px;height:26px;border:3px solid #b9e43a"></div>
<div class="a " style="left:1018px;top:670px;width:5px;height:305px;background:#1e1e1e;"></div>
<div class="a " style="left:1020px;top:826px;width:1px;height:2px;background:#888;"></div>
<div class="a " style="left:1020px;top:829px;width:1px;height:2px;background:#888;"></div>
<div class="a " style="left:1020px;top:832px;width:1px;height:2px;background:#888;"></div>
<div class="a " style="left:1020px;top:835px;width:1px;height:2px;background:#888;"></div>
<div class="a " style="left:1020px;top:838px;width:1px;height:2px;background:#888;"></div>
<div class="a " style="left:1020px;top:841px;width:1px;height:2px;background:#888;"></div>
<div class="a " style="left:1023px;top:670px;width:886px;height:25px;background:#262626;"></div>
<div class="a " style="left:1023px;top:695px;width:10px;height:280px;background:#1e1e1e;"></div>
<svg class="a" style="left:0px;top:686px;" width="1920" height="8" viewBox="0 0 1920 8"><rect x="1033.4" y="0" width="1" height="8" fill="#b0b0b0"/><rect x="1043.9" y="4" width="1" height="4" fill="#8a8a8a"/><rect x="1054.3" y="4" width="1" height="4" fill="#8a8a8a"/><rect x="1064.8" y="4" width="1" height="4" fill="#8a8a8a"/><rect x="1075.2" y="4" width="1" height="4" fill="#8a8a8a"/><rect x="1085.7" y="0" width="1" height="8" fill="#b0b0b0"/><rect x="1096.1" y="4" width="1" height="4" fill="#8a8a8a"/><rect x="1106.6" y="4" width="1" height="4" fill="#8a8a8a"/><rect x="1117.0" y="4" width="1" height="4" fill="#8a8a8a"/><rect x="1127.5" y="4" width="1" height="4" fill="#8a8a8a"/><rect x="1138.0" y="0" width="1" height="8" fill="#b0b0b0"/><rect x="1148.4" y="4" width="1" height="4" fill="#8a8a8a"/><rect x="1158.9" y="4" width="1" height="4" fill="#8a8a8a"/><rect x="1169.3" y="4" width="1" height="4" fill="#8a8a8a"/><rect x="1179.8" y="4" width="1" height="4" fill="#8a8a8a"/><rect x="1190.2" y="0" width="1" height="8" fill="#b0b0b0"/><rect x="1200.7" y="4" width="1" height="4" fill="#8a8a8a"/><rect x="1211.1" y="4" width="1" height="4" fill="#8a8a8a"/><rect x="1221.6" y="4" width="1" height="4" fill="#8a8a8a"/><rect x="1232.0" y="4" width="1" height="4" fill="#8a8a8a"/><rect x="1242.5" y="0" width="1" height="8" fill="#b0b0b0"/><rect x="1253.0" y="4" width="1" height="4" fill="#8a8a8a"/><rect x="1263.4" y="4" width="1" height="4" fill="#8a8a8a"/><rect x="1273.9" y="4" width="1" height="4" fill="#8a8a8a"/><rect x="1284.3" y="4" width="1" height="4" fill="#8a8a8a"/><rect x="1294.8" y="0" width="1" height="8" fill="#b0b0b0"/><rect x="1305.2" y="4" width="1" height="4" fill="#8a8a8a"/><rect x="1315.7" y="4" width="1" height="4" fill="#8a8a8a"/><rect x="1326.1" y="4" width="1" height="4" fill="#8a8a8a"/><rect x="1336.6" y="4" width="1" height="4" fill="#8a8a8a"/><rect x="1347.1" y="0" width="1" height="8" fill="#b0b0b0"/><rect x="1357.5" y="4" width="1" height="4" fill="#8a8a8a"/><rect x="1368.0" y="4" width="1" height="4" fill="#8a8a8a"/><rect x="1378.4" y="4" width="1" height="4" fill="#8a8a8a"/><rect x="1388.9" y="4" width="1" height="4" fill="#8a8a8a"/><rect x="1399.3" y="0" width="1" height="8" fill="#b0b0b0"/><rect x="1409.8" y="4" width="1" height="4" fill="#8a8a8a"/><rect x="1420.2" y="4" width="1" height="4" fill="#8a8a8a"/><rect x="1430.7" y="4" width="1" height="4" fill="#8a8a8a"/><rect x="1441.1" y="4" width="1" height="4" fill="#8a8a8a"/><rect x="1451.6" y="0" width="1" height="8" fill="#b0b0b0"/><rect x="1462.1" y="4" width="1" height="4" fill="#8a8a8a"/><rect x="1472.5" y="4" width="1" height="4" fill="#8a8a8a"/><rect x="1483.0" y="4" width="1" height="4" fill="#8a8a8a"/><rect x="1493.4" y="4" width="1" height="4" fill="#8a8a8a"/><rect x="1503.9" y="0" width="1" height="8" fill="#b0b0b0"/><rect x="1514.3" y="4" width="1" height="4" fill="#8a8a8a"/><rect x="1524.8" y="4" width="1" height="4" fill="#8a8a8a"/><rect x="1535.2" y="4" width="1" height="4" fill="#8a8a8a"/><rect x="1545.7" y="4" width="1" height="4" fill="#8a8a8a"/><rect x="1556.2" y="0" width="1" height="8" fill="#b0b0b0"/><rect x="1566.6" y="4" width="1" height="4" fill="#8a8a8a"/><rect x="1577.1" y="4" width="1" height="4" fill="#8a8a8a"/><rect x="1587.5" y="4" width="1" height="4" fill="#8a8a8a"/><rect x="1598.0" y="4" width="1" height="4" fill="#8a8a8a"/><rect x="1608.4" y="0" width="1" height="8" fill="#b0b0b0"/><rect x="1618.9" y="4" width="1" height="4" fill="#8a8a8a"/><rect x="1629.3" y="4" width="1" height="4" fill="#8a8a8a"/><rect x="1639.8" y="4" width="1" height="4" fill="#8a8a8a"/><rect x="1650.2" y="4" width="1" height="4" fill="#8a8a8a"/><rect x="1660.7" y="0" width="1" height="8" fill="#b0b0b0"/><rect x="1671.2" y="4" width="1" height="4" fill="#8a8a8a"/><rect x="1681.6" y="4" width="1" height="4" fill="#8a8a8a"/><rect x="1692.1" y="4" width="1" height="4" fill="#8a8a8a"/><rect x="1702.5" y="4" width="1" height="4" fill="#8a8a8a"/><rect x="1713.0" y="0" width="1" height="8" fill="#b0b0b0"/><rect x="1723.4" y="4" width="1" height="4" fill="#8a8a8a"/><rect x="1733.9" y="4" width="1" height="4" fill="#8a8a8a"/><rect x="1744.3" y="4" width="1" height="4" fill="#8a8a8a"/><rect x="1754.8" y="4" width="1" height="4" fill="#8a8a8a"/><rect x="1765.2" y="0" width="1" height="8" fill="#b0b0b0"/><rect x="1775.7" y="4" width="1" height="4" fill="#8a8a8a"/><rect x="1786.2" y="4" width="1" height="4" fill="#8a8a8a"/><rect x="1796.6" y="4" width="1" height="4" fill="#8a8a8a"/><rect x="1807.1" y="4" width="1" height="4" fill="#8a8a8a"/><rect x="1817.5" y="0" width="1" height="8" fill="#b0b0b0"/><rect x="1828.0" y="4" width="1" height="4" fill="#8a8a8a"/><rect x="1838.4" y="4" width="1" height="4" fill="#8a8a8a"/><rect x="1848.9" y="4" width="1" height="4" fill="#8a8a8a"/><rect x="1859.3" y="4" width="1" height="4" fill="#8a8a8a"/><rect x="1869.8" y="0" width="1" height="8" fill="#b0b0b0"/><rect x="1880.3" y="4" width="1" height="4" fill="#8a8a8a"/><rect x="1890.7" y="4" width="1" height="4" fill="#8a8a8a"/><rect x="1901.2" y="4" width="1" height="4" fill="#8a8a8a"/></svg>
<div class="a t" style="left:1012.9px;top:672px;width:40px;text-align:center;font-size:12px;color:#dcdcdc">0</div>
<div class="a t" style="left:1065.2px;top:672px;width:40px;text-align:center;font-size:12px;color:#dcdcdc">15</div>
<div class="a t" style="left:1117.5px;top:672px;width:40px;text-align:center;font-size:12px;color:#dcdcdc">30</div>
<div class="a t" style="left:1169.7px;top:672px;width:40px;text-align:center;font-size:12px;color:#dcdcdc">45</div>
<div class="a t" style="left:1222.0px;top:672px;width:40px;text-align:center;font-size:12px;color:#dcdcdc">60</div>
<div class="a t" style="left:1274.3px;top:672px;width:40px;text-align:center;font-size:12px;color:#dcdcdc">75</div>
<div class="a t" style="left:1326.6px;top:672px;width:40px;text-align:center;font-size:12px;color:#dcdcdc">90</div>
<div class="a t" style="left:1378.8px;top:672px;width:40px;text-align:center;font-size:12px;color:#dcdcdc">105</div>
<div class="a t" style="left:1431.1px;top:672px;width:40px;text-align:center;font-size:12px;color:#dcdcdc">120</div>
<div class="a t" style="left:1483.4px;top:672px;width:40px;text-align:center;font-size:12px;color:#dcdcdc">135</div>
<div class="a t" style="left:1535.7px;top:672px;width:40px;text-align:center;font-size:12px;color:#dcdcdc">150</div>
<div class="a t" style="left:1587.9px;top:672px;width:40px;text-align:center;font-size:12px;color:#dcdcdc">165</div>
<div class="a t" style="left:1640.2px;top:672px;width:40px;text-align:center;font-size:12px;color:#dcdcdc">180</div>
<div class="a t" style="left:1692.5px;top:672px;width:40px;text-align:center;font-size:12px;color:#dcdcdc">195</div>
<div class="a t" style="left:1744.8px;top:672px;width:40px;text-align:center;font-size:12px;color:#dcdcdc">210</div>
<div class="a t" style="left:1797.0px;top:672px;width:40px;text-align:center;font-size:12px;color:#dcdcdc">225</div>
<div class="a t" style="left:1849.3px;top:672px;width:40px;text-align:center;font-size:12px;color:#dcdcdc">240</div>
<div class="a " style="left:1035px;top:695px;width:870px;height:16px;background:#434343;"></div>
<div class="a " style="left:1905px;top:693px;width:5px;height:18px;background:#72c6ac;border-radius:2px"></div>
<svg class="a" style="left:1026px;top:683px;" width="15" height="10" viewBox="0 0 15 10"><path d="M0.5 0.5 H14.5 L7.5 9.5 Z" fill="#74c6ac"/></svg>
<div class="a " style="left:1029px;top:693px;width:6px;height:18px;background:#74c6ac;border-radius:1px"></div>
<div class="a " style="left:1033px;top:711px;width:2px;height:251px;background:#4f9c86;"></div>
<div class="a " style="left:1034px;top:714px;width:871px;height:18px;background:repeating-linear-gradient(-45deg,#7aa6f8 0px,#5a86d8 1.2px,#5a86d8 11px,#7aa6f8 12.2px,#6892e6 13.4px,#6892e6 23.1px,#7aa6f8 24.3px);border-radius:3px;"></div>
<div class="a " style="left:1034px;top:736px;width:871px;height:18px;background:radial-gradient(circle,#8cc65a 0.7px,rgba(140,198,90,0.5) 1px,transparent 1.3px) 0 0/3px 3px,repeating-linear-gradient(-45deg,#dcef9c 0px,#dcef9c 17px,#ecf7bc 17px,#ecf7bc 34px);border-radius:3px;border:1px solid #f4f4f4"></div>
<div class="a " style="left:1034px;top:758px;width:871px;height:18px;background:#ffe67e;border-radius:3px;"></div>
<div class="a " style="left:1034px;top:780px;width:871px;height:18px;background:#ffe67e;border-radius:3px;"></div>
<div class="a " style="left:1034px;top:802px;width:871px;height:18px;background:#ffe67e;border-radius:3px;"></div>
<div class="a " style="left:1034px;top:846px;width:871px;height:18px;background:#ffe67e;border-radius:3px;"></div>
<div class="a " style="left:1034px;top:824px;width:871px;height:18px;background:#ff8ab2;border-radius:3px;"></div>
<div class="a t" style="left:1042px;top:716px;color:#ffffff;font-size:12px;">Group Array</div>
<div class="a t" style="left:1042px;top:738px;color:#2c3024;font-size:12px;">Value [Shape Scale]</div>
<div class="a t" style="left:1042px;top:760px;color:#222;font-size:12px;">Duplicator</div>
<div class="a t" style="left:1042px;top:782px;color:#222;font-size:12px;">Basic Shape</div>
<div class="a t" style="left:1042px;top:804px;color:#222;font-size:12px;">profile</div>
<div class="a t" style="left:1042px;top:826px;color:#ffffff;font-size:12px;">profile Image Shader</div>
<div class="a t" style="left:1042px;top:848px;color:#222;font-size:12px;">Background Shape</div>
<div class="a " style="left:495px;top:964px;width:509px;height:10px;background:#484848;border-radius:5px"></div>
<div class="a " style="left:1027px;top:964px;width:885px;height:10px;background:#484848;border-radius:5px"></div>
<div class="a " style="left:494px;top:975px;width:524px;height:23px;background:#3c3c3c;"></div>
<div class="a " style="left:1023px;top:975px;width:891px;height:23px;background:#3c3c3c;"></div>
<div class="a " style="left:497px;top:978px;width:20px;height:19px;background:#2c2c2c;border-radius:4px;border:1px solid #222"></div>
<svg class="a" style="left:500px;top:983px;" width="14" height="10" viewBox="0 0 14 10"><path d="M4 0 H14 V10 H4 L0 5 Z" fill="#d8d8d8"/><circle cx="5" cy="5" r="1.6" fill="#2c2c2c"/></svg>
<div class="a t" style="left:520px;top:981px;color:#e6e6e6;font-size:12px;">1 selected</div>
<div class="a " style="left:811px;top:978px;width:18px;height:18px;background:#2c2c2c;border-radius:4px;border:1px solid #222"></div>
<svg class="a" style="left:814px;top:981px;" width="12" height="12" viewBox="0 0 12 12"><rect x="0.5" y="0.5" width="11" height="11" fill="none" stroke="#ccc"/><rect x="4" y="4" width="4" height="4" fill="#ddd"/></svg>
<div class="a " style="left:834px;top:978px;width:182px;height:18px;background:#4a4a4a;border-radius:4px"></div>
<div class="a " style="left:835px;top:979px;width:85px;height:16px;background:#2a2a2a;border-radius:3px"></div>
<svg class="a" style="left:840px;top:981px;" width="13" height="12" viewBox="0 0 13 12"><path d="M1 1.5 H12 M3 6 H10 M1 10.5 H12" stroke="#35d07f" stroke-width="1.8"/></svg>
<div class="a t" style="left:856px;top:981px;color:#ececec;font-size:12px;">Time Editor</div>
<svg class="a" style="left:928px;top:980px;" width="14" height="14" viewBox="0 0 14 14"><path d="M1.5 0 V12.5 H14" stroke="#bbb" stroke-width="1" fill="none"/><path d="M2 12 L12 3" stroke="#bbb" stroke-width="1"/></svg>
<div class="a t" style="left:945px;top:981px;color:#e6e6e6;font-size:12px;">Graph Editor</div>
<div class="a " style="left:1029px;top:978px;width:18px;height:19px;background:#2c2c2c;border-radius:4px;border:1px solid #222"></div>
<svg class="a" style="left:1032px;top:982px;" width="13" height="11" viewBox="0 0 13 11"><path d="M0 1 H13 M3 5.5 H13 M0 10 H3 M6 10 H9" stroke="#ddd" stroke-width="1.5"/></svg>
<div class="a " style="left:1050px;top:978px;width:150px;height:19px;background:#2a2a2a;border-radius:3px"></div>
<div class="a t" style="left:1052px;top:981px;color:#ececec;font-size:12px;">Default Keyframe Layer</div>
<div class="a " style="left:1206px;top:978px;width:70px;height:19px;background:#2a2a2a;border-radius:3px"></div>
<div class="a t" style="left:1211px;top:981px;color:#555;font-size:12px;">F</div>
<div class="a t" style="left:1223px;top:981px;color:#ddd;font-size:12px;">-</div>
<div class="a t" style="left:1282px;top:981px;color:#e6e6e6;font-size:12px;">Align:</div>
<div class="a " style="left:1319px;top:978px;width:53px;height:18px;background:#262626;border-radius:4px;border:1px solid #222"></div>
<div class="a " style="left:1336px;top:979px;width:1px;height:16px;background:#444;"></div>
<div class="a " style="left:1354px;top:979px;width:1px;height:16px;background:#444;"></div>
<svg class="a" style="left:1319px;top:978px;" width="53" height="18" viewBox="0 0 53 18"><path d="M3.5 3 V15" stroke="#ddd"/><path d="M5 6 H8 M5 12 H12" stroke="#ddd" stroke-width="1.6"/><path d="M27 3 V15" stroke="#6cc2a8" stroke-dasharray="2 1"/><path d="M22 6 H25 M22 12 H32" stroke="#ddd" stroke-width="1.6"/><path d="M50 3 V15" stroke="#ddd"/><path d="M45 6 H48 M40 12 H49" stroke="#ddd" stroke-width="1.6"/></svg>
<div class="a " style="left:1375px;top:978px;width:18px;height:19px;background:#2c2c2c;border-radius:4px;border:1px solid #222"></div>
<svg class="a" style="left:1378px;top:981px;" width="12" height="12" viewBox="0 0 12 12"><rect x="1" y="1" width="10" height="10" fill="none" stroke="#ccc" stroke-dasharray="2 1.5"/><rect x="5" y="5" width="2" height="2" fill="#ddd"/></svg>
<div class="a " style="left:1397px;top:978px;width:30px;height:19px;background:#2c2c2c;border-radius:4px;border:1px solid #222"></div>
<div class="a " style="left:1415px;top:979px;width:1px;height:17px;background:#444;"></div>
<svg class="a" style="left:1400px;top:981px;" width="12" height="12" viewBox="0 0 12 12"><path d="M2 10 V6 A4 4 0 0 1 10 6 V8" stroke="#ddd" stroke-width="2.2" fill="none"/></svg>
<svg class="a" style="left:1418px;top:983px;" width="7" height="8" viewBox="0 0 7 8"><path d="M0 0 L6 4 L0 8 Z" stroke="#8a8a8a" stroke-width="1" fill="none"/></svg>
<div class="a " style="left:1431px;top:978px;width:31px;height:19px;background:#2c2c2c;border-radius:4px;border:1px solid #222"></div>
<div class="a " style="left:1449px;top:979px;width:1px;height:17px;background:#444;"></div>
<svg class="a" style="left:1434px;top:981px;" width="14" height="12" viewBox="0 0 14 12"><path d="M0 6 H14 M4 2 V10 M7 0 V12 M10 3 V9" stroke="#ddd" stroke-width="1"/></svg>
<svg class="a" style="left:1452px;top:983px;" width="7" height="8" viewBox="0 0 7 8"><path d="M0 0 L6 4 L0 8 Z" stroke="#8a8a8a" stroke-width="1" fill="none"/></svg>
<svg class="a" style="left:1743px;top:981px;" width="14" height="14" viewBox="0 0 14 14"><circle cx="6" cy="6" r="5" stroke="#ddd" stroke-width="1.2" fill="none"/><path d="M3.5 6 H8.5" stroke="#ddd" stroke-width="1.2"/><path d="M10 10 L13 13" stroke="#ddd" stroke-width="1.6"/></svg>
<div class="a " style="left:1766px;top:985px;width:116px;height:4px;background:#4a4a4a;border-radius:2px"></div>
<svg class="a" style="left:1760px;top:981px;" width="13" height="13" viewBox="0 0 13 13"><circle cx="6.5" cy="6.5" r="5.5" fill="#6cc2a8"/><circle cx="6.5" cy="6.5" r="2" fill="#5aa58c"/></svg>
<svg class="a" style="left:1888px;top:981px;" width="14" height="14" viewBox="0 0 14 14"><circle cx="6" cy="6" r="5" stroke="#ddd" stroke-width="1.2" fill="none"/><path d="M3.5 6 H8.5 M6 3.5 V8.5" stroke="#ddd" stroke-width="1.2"/><path d="M10 10 L13 13" stroke="#ddd" stroke-width="1.6"/></svg>
<div class="a " style="left:494px;top:998px;width:1420px;height:6px;background:#161616;"></div>
<div class="a " style="left:494px;top:1004px;width:1420px;height:25px;background:#3c3c3c;"></div>
<div class="a " style="left:498px;top:1011px;width:2px;height:2px;background:#888;"></div>
<div class="a " style="left:498px;top:1015px;width:2px;height:2px;background:#888;"></div>
<div class="a " style="left:498px;top:1019px;width:2px;height:2px;background:#888;"></div>
<div class="a " style="left:505px;top:1007px;width:20px;height:19px;background:#2c2c2c;border-radius:4px;border:1px solid #222"></div>
<svg class="a" style="left:508px;top:1010px;" width="14" height="13" viewBox="0 0 14 13"><path d="M0.5 0.5 H13.5 V9.5 H6 L3 12.5 V9.5 H0.5 Z" fill="#ddd"/><path d="M3 3 H11 M3 5 H11 M3 7 H9" stroke="#2c2c2c" stroke-width="1"/></svg>
<div class="a " style="left:528px;top:1008px;width:18px;height:17px;background:#35c46c;border-radius:2px"></div>
<div class="a t" style="left:530px;top:1009px;color:#1a1a1a;font-size:12px;">9+</div>
<div class="a " style="left:554px;top:1012px;width:6px;height:6px;background:#35c46c;border-radius:50%"></div>
<div class="a t" style="left:565px;top:1009px;color:#ececec;font-size:12px;">Saved scene to: D:/DATA/AI Creator/Cavalry/images-in-duplicators.cv.</div>
<div class="a t" style="left:1349px;top:1009px;color:#d6d6d6;font-size:11.5px;font-style:italic;letter-spacing:-0.45px">Click to see next message</div>
<div class="a " style="left:1477px;top:1006px;width:80px;height:18px;background:#dcc070;border-radius:2px"></div>
<div class="a t" style="left:1483px;top:1009px;color:#2a2a2a;font-size:12px;letter-spacing:-0.35px">Feedback</div>

<svg class="a" style="left:1537px;top:1009px;" width="13" height="13" viewBox="0 0 13 13"><rect x="1" y="1" width="10" height="11" fill="#f4f4f4"/><path d="M4 10 L11 3" stroke="#e0603a" stroke-width="2.2"/></svg>
<div class="a " style="left:1560px;top:1006px;width:109px;height:18px;background:#34c15e;border-radius:2px"></div>
<div class="a t" style="left:1566px;top:1009px;color:#1a1a1a;font-size:12px;letter-spacing:-0.35px">Upgrade to Pro</div>

<svg class="a" style="left:1650px;top:1009px;" width="15" height="13" viewBox="0 0 15 13"><ellipse cx="4" cy="8" rx="3.5" ry="4" fill="#f2c530"/><ellipse cx="11" cy="8" rx="3.5" ry="4" fill="#f2c530"/></svg>
<div class="a " style="left:1672px;top:1006px;width:130px;height:18px;background:#b795f0;border-radius:2px"></div>
<div class="a t" style="left:1678px;top:1009px;color:#1a1a1a;font-size:12px;letter-spacing:-0.35px">New Beta Available</div>

<svg class="a" style="left:1780px;top:1008px;" width="15" height="15" viewBox="0 0 15 15"><circle cx="7.5" cy="7.5" r="6.5" fill="#f2b230"/><circle cx="5" cy="6" r="1" fill="#7a3"/><path d="M4 10 Q7.5 12 11 10" stroke="#a52" fill="none"/></svg>
<div class="a " style="left:1805px;top:1006px;width:106px;height:18px;background:#2ea2ee;border-radius:2px"></div>
<div class="a t" style="left:1811px;top:1009px;color:#1a1a1a;font-size:12px;letter-spacing:-0.35px">Tips and Tricks</div>

<svg class="a" style="left:1888px;top:1008px;" width="14" height="14" viewBox="0 0 14 14"><path d="M2 12 L5 7 L9 3 Q12 1 13 1 Q13 4 11 5 L7 9 Z" fill="#e8e8e8"/><circle cx="9.5" cy="4.5" r="1.2" fill="#e04040"/><path d="M1 13 L4 10" stroke="#f06030" stroke-width="2"/></svg>
<div class="a " style="left:0px;top:1020px;width:494px;height:9px;background:#1c1c1c;"></div>
<svg class="a" style="left:1372px;top:51px;" width="26" height="26" viewBox="0 0 26 26"><circle cx="6.4" cy="5.4" r="1.5" fill="#e8d46a"/><circle cx="6.4" cy="13" r="1.5" fill="#e8d46a"/><circle cx="6.4" cy="20.2" r="1.5" fill="#e8d46a"/><circle cx="14" cy="5.4" r="1.5" fill="#e8d46a"/><circle cx="14" cy="13" r="1.5" fill="#e8d46a"/><circle cx="14" cy="20.2" r="1.5" fill="#e8d46a"/><circle cx="21.4" cy="5.4" r="1.5" fill="#e8d46a"/><circle cx="21.4" cy="13" r="1.5" fill="#e8d46a"/><circle cx="21.4" cy="20.2" r="1.5" fill="#e8d46a"/></svg>
<svg class="a" style="left:1402px;top:51px;" width="26" height="26" viewBox="0 0 26 26"><path d="M5.3 8.6 L9 4.7 H22 L18.1 8.6 Z" fill="#d8d8d8"/><path d="M18.1 8.6 L22 4.7 V17.8 L18.1 21.7 Z" fill="#bdbdbd"/><rect x="5.3" y="8.6" width="12.8" height="13.1" fill="#e8d46a"/></svg>
<svg class="a" style="left:1432px;top:51px;" width="26" height="26" viewBox="0 0 26 26"><rect x="4.2" y="3" width="20" height="19.7" rx="5" fill="none" stroke="#dcdcdc" stroke-width="1.2"/><path d="M9.3 6.4 h2.5 v13.6 h-2.5 Z M13.2 6.4 h5.8 v2.2 h-5.8 Z M13.2 12.2 h3.2 v2.5 h-3.2 Z" fill="#e8d46a"/></svg>
<svg class="a" style="left:1462px;top:51px;" width="26" height="26" viewBox="0 0 26 26"><circle cx="7.3" cy="6.4" r="1.5" fill="#e8d46a"/><circle cx="12.4" cy="9.3" r="1.3" fill="#cfcfcf"/><circle cx="18.2" cy="5.4" r="1.3" fill="#cfcfcf"/><circle cx="21.4" cy="13.2" r="2.5" fill="#e8d46a"/><circle cx="13.4" cy="16.3" r="2.5" fill="#cfcfcf"/><circle cx="6.3" cy="17.3" r="1.5" fill="#e8d46a"/><circle cx="19.2" cy="21.3" r="1.5" fill="#e8d46a"/></svg>
<svg class="a" style="left:1497px;top:51px;" width="26" height="26" viewBox="0 0 26 26"><path d="M3.5 13 H6 M8.5 13 H11 M13 13 H23" stroke="#98dc9c" stroke-width="1.8"/><path d="M16.8 6.8 L23.5 13 L16.8 19.2" stroke="#98dc9c" stroke-width="1.8" fill="none"/></svg>
<svg class="a" style="left:1527px;top:51px;" width="26" height="26" viewBox="0 0 26 26"><path d="M5.3 6.4 V22" stroke="#dcdcdc" stroke-width="1"/><rect x="9" y="7" width="8.8" height="4.5" fill="#98dc9c"/><rect x="9" y="14" width="14.2" height="5" fill="#98dc9c"/></svg>
<svg class="a" style="left:1562px;top:51px;" width="26" height="26" viewBox="0 0 26 26"><path d="M14 5 V21 M5.7 13 H22" stroke="#4a4a4a" stroke-width="3"/><circle cx="14" cy="5" r="2" fill="#8ec6f6"/><circle cx="5.7" cy="13" r="2" fill="#8ec6f6"/><circle cx="14" cy="13" r="2" fill="#8ec6f6"/><circle cx="22" cy="13" r="2" fill="#8ec6f6"/><circle cx="14" cy="21" r="2" fill="#8ec6f6"/></svg>
<svg class="a" style="left:1592px;top:51px;" width="26" height="26" viewBox="0 0 26 26"><path d="M5.9 13 H21.9" stroke="#4a4a4a" stroke-width="3"/><circle cx="5.9" cy="13" r="2" fill="#8ec6f6"/><circle cx="13.9" cy="13" r="2" fill="#8ec6f6"/><circle cx="21.9" cy="13" r="2" fill="#8ec6f6"/></svg>
<svg class="a" style="left:1622px;top:51px;" width="26" height="26" viewBox="0 0 26 26"><path d="M15.5 5.5 A7.5 7.5 0 0 0 15.5 20.5" stroke="#cfcfcf" stroke-width="1.8" fill="none"/><path d="M15.5 3 V8 M13 5.5 H18 M15.5 18 V23 M13 20.5 H18" stroke="#7fc88a" stroke-width="1.3"/></svg>
<svg class="a" style="left:1652px;top:51px;" width="26" height="26" viewBox="0 0 26 26"><path d="M3 6.7 H25 M3 19.5 H25" stroke="#dcdcdc" stroke-width="1.2"/><rect x="3.7" y="10" width="4" height="6" fill="#e8d46a"/><rect x="9.9" y="10" width="8" height="6" fill="#e8d46a"/><rect x="20" y="10" width="3.7" height="6" fill="#e8d46a"/></svg>
<svg class="a" style="left:1688px;top:51px;" width="26" height="26" viewBox="0 0 26 26"><path d="M3.7 6.5 L15 3.8 L15.6 6.3 L12 7.1 L14.5 16.5 L11.4 17.3 L9 8 L4.3 9 Z" fill="#e8d46a"/><path d="M4 20.5 Q6 21.5 8 20.5 Q12 18 15 20.5 Q18 22.5 19 19.5" stroke="#cfcfcf" stroke-width="1.1" fill="none"/></svg>
<svg class="a" style="left:1722px;top:51px;" width="26" height="26" viewBox="0 0 26 26"><rect x="4" y="4" width="20" height="1.7" fill="#8ec6f6"/><rect x="4" y="7.9" width="3.7" height="3.9" fill="#d6d6d6"/><rect x="9.1" y="13.2" width="8.9" height="3.7" fill="#d6d6d6"/><rect x="19.4" y="18" width="4.6" height="3.7" fill="#d6d6d6"/></svg>
<svg class="a" style="left:1752px;top:51px;" width="26" height="26" viewBox="0 0 26 26"><rect x="4" y="4" width="20" height="1.7" fill="#8ec6f6"/><rect x="4" y="7.9" width="12" height="3.9" fill="#d6d6d6"/><rect x="8.3" y="13.2" width="11.7" height="3.7" fill="#d6d6d6"/><rect x="12.7" y="18" width="11.3" height="3.7" fill="#d6d6d6"/></svg>
<svg class="a" style="left:1787px;top:51px;" width="26" height="26" viewBox="0 0 26 26"><rect x="3.7" y="5.5" width="20.6" height="15.5" fill="none" stroke="#dcdcdc" stroke-width="1.2"/><rect x="6" y="8" width="4" height="10.5" fill="#e8d46a"/><rect x="12" y="8" width="4" height="10.5" fill="#e8d46a"/><rect x="18" y="8" width="4" height="10.5" fill="#e8d46a"/></svg>
<svg class="a" style="left:1817px;top:51px;" width="26" height="26" viewBox="0 0 26 26"><rect x="3.9" y="5.5" width="20.6" height="15.5" fill="none" stroke="#dcdcdc" stroke-width="1.2"/><rect x="6.3" y="8" width="15.8" height="4" fill="#e8d46a"/><rect x="6.3" y="14.5" width="15.8" height="4" fill="#e8d46a"/></svg>
<svg class="a" style="left:1847px;top:51px;" width="26" height="26" viewBox="0 0 26 26"><rect x="3.9" y="5.5" width="20.6" height="15.5" fill="none" stroke="#dcdcdc" stroke-width="1.2"/><rect x="6.3" y="8" width="6.5" height="4" fill="#e8d46a"/><rect x="15.4" y="8" width="6.5" height="4" fill="#e8d46a"/><rect x="6.3" y="14.5" width="6.5" height="4" fill="#e8d46a"/><rect x="15.4" y="14.5" width="6.5" height="4" fill="#e8d46a"/></svg>
<svg class="a" style="left:1882px;top:51px;" width="26" height="26" viewBox="0 0 26 26"><rect x="3.5" y="8.5" width="13" height="10.5" rx="1" fill="#d0d0d0"/><path d="M16.5 13.5 L23 9.5 V18.5 Z" fill="#d0d0d0"/><rect x="6" y="6" width="6" height="1.3" fill="#d0d0d0"/><circle cx="6.5" cy="11.5" r="1.2" fill="#333"/></svg></body></html>
